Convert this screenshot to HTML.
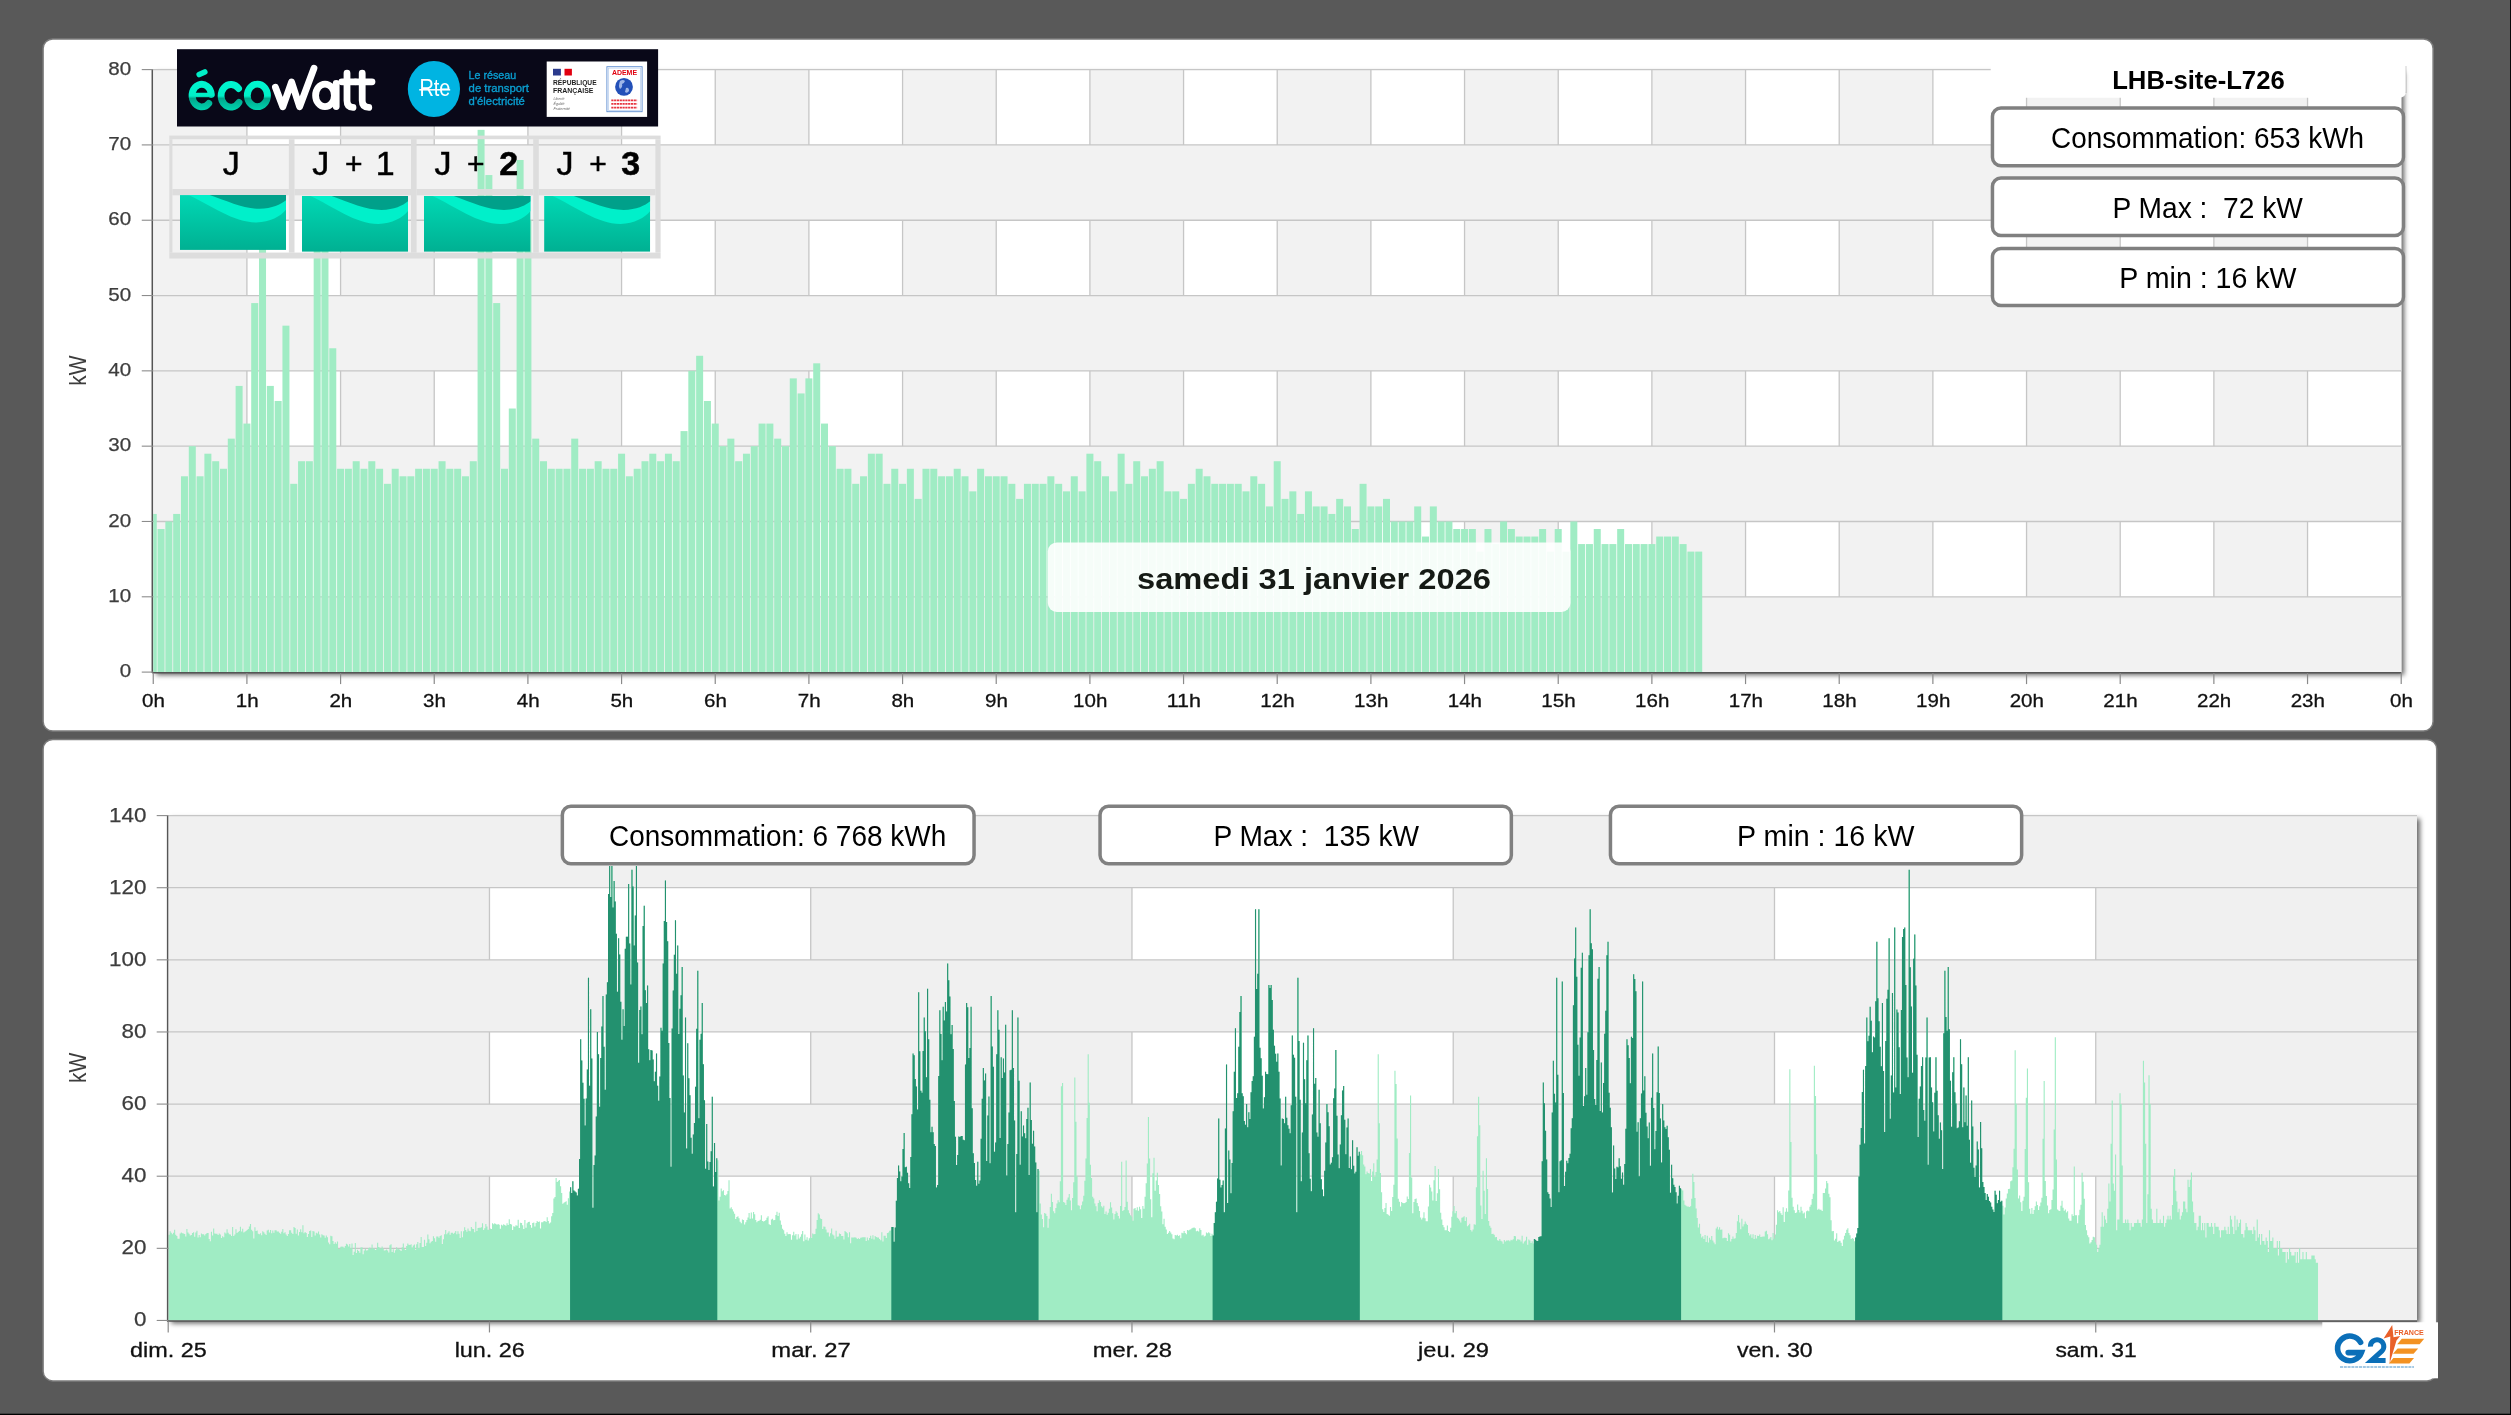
<!DOCTYPE html>
<html><head><meta charset="utf-8"><title>Ecowatt</title>
<style>
html,body{margin:0;padding:0;}
body{width:2511px;height:1415px;overflow:hidden;background:#595959;position:relative;font-family:"Liberation Sans",sans-serif;}
.panel{position:absolute;background:#fff;border-radius:9px;box-shadow:0 0 0 1.2px #7a7a7a, 0 0 2px 1px rgba(125,125,125,.9);}
#p1{left:44.3px;top:39.8px;width:2388px;height:690.4px;}
#p2{left:44.3px;top:740.6px;width:2391.6px;height:639.6px;}
svg#main{position:absolute;left:0;top:0;will-change:transform;}
svg text{font-family:"Liberation Sans",sans-serif;}
</style></head><body>
<svg id="main" width="2511" height="1415" viewBox="0 0 2511 1415">
<rect x="43.1" y="38.9" width="2390" height="692.1" rx="9.6" ry="9.6" fill="#fff" stroke="#7c7c7c" stroke-width="1.5"/>
<rect x="43.1" y="739.5" width="2393.6" height="641.4" rx="9.6" ry="9.6" fill="#fff" stroke="#7c7c7c" stroke-width="1.5"/>
<defs>
<filter id="ps" x="-2%" y="-2%" width="104%" height="106%"><feDropShadow dx="3" dy="3" stdDeviation="2.4" flood-color="#000" flood-opacity="0.6"/></filter>
<clipPath id="tclip"><rect x="153.25" y="64.6" width="2247.95" height="607.5"/></clipPath>
<linearGradient id="eco" gradientUnits="userSpaceOnUse" x1="0" y1="80.5" x2="0" y2="110.3"><stop offset="0" stop-color="#00f6d0"/><stop offset="0.52" stop-color="#00f0c8"/><stop offset="0.6" stop-color="#00a78c"/><stop offset="1" stop-color="#00d4b0"/></linearGradient>
<linearGradient id="sea" x1="0" y1="0" x2="0" y2="1"><stop offset="0" stop-color="#00d8b4"/><stop offset="1" stop-color="#00b092"/></linearGradient>
</defs>
<rect x="153.25" y="69.6" width="2247.95" height="602.5" fill="#fff" filter="url(#ps)"/>
<rect x="153.25" y="69.6" width="93.66" height="602.50" fill="#f2f2f2"/>
<rect x="340.58" y="69.6" width="93.66" height="602.50" fill="#f2f2f2"/>
<rect x="527.91" y="69.6" width="93.66" height="602.50" fill="#f2f2f2"/>
<rect x="715.24" y="69.6" width="93.66" height="602.50" fill="#f2f2f2"/>
<rect x="902.57" y="69.6" width="93.66" height="602.50" fill="#f2f2f2"/>
<rect x="1089.90" y="69.6" width="93.66" height="602.50" fill="#f2f2f2"/>
<rect x="1277.22" y="69.6" width="93.66" height="602.50" fill="#f2f2f2"/>
<rect x="1464.55" y="69.6" width="93.66" height="602.50" fill="#f2f2f2"/>
<rect x="1651.88" y="69.6" width="93.66" height="602.50" fill="#f2f2f2"/>
<rect x="1839.21" y="69.6" width="93.66" height="602.50" fill="#f2f2f2"/>
<rect x="2026.54" y="69.6" width="93.66" height="602.50" fill="#f2f2f2"/>
<rect x="2213.87" y="69.6" width="93.66" height="602.50" fill="#f2f2f2"/>
<line x1="246.91" y1="69.6" x2="246.91" y2="672.1" stroke="#c6c6c6" stroke-width="1.3"/>
<line x1="340.58" y1="69.6" x2="340.58" y2="672.1" stroke="#c6c6c6" stroke-width="1.3"/>
<line x1="434.24" y1="69.6" x2="434.24" y2="672.1" stroke="#c6c6c6" stroke-width="1.3"/>
<line x1="527.91" y1="69.6" x2="527.91" y2="672.1" stroke="#c6c6c6" stroke-width="1.3"/>
<line x1="621.57" y1="69.6" x2="621.57" y2="672.1" stroke="#c6c6c6" stroke-width="1.3"/>
<line x1="715.24" y1="69.6" x2="715.24" y2="672.1" stroke="#c6c6c6" stroke-width="1.3"/>
<line x1="808.90" y1="69.6" x2="808.90" y2="672.1" stroke="#c6c6c6" stroke-width="1.3"/>
<line x1="902.57" y1="69.6" x2="902.57" y2="672.1" stroke="#c6c6c6" stroke-width="1.3"/>
<line x1="996.23" y1="69.6" x2="996.23" y2="672.1" stroke="#c6c6c6" stroke-width="1.3"/>
<line x1="1089.90" y1="69.6" x2="1089.90" y2="672.1" stroke="#c6c6c6" stroke-width="1.3"/>
<line x1="1183.56" y1="69.6" x2="1183.56" y2="672.1" stroke="#c6c6c6" stroke-width="1.3"/>
<line x1="1277.22" y1="69.6" x2="1277.22" y2="672.1" stroke="#c6c6c6" stroke-width="1.3"/>
<line x1="1370.89" y1="69.6" x2="1370.89" y2="672.1" stroke="#c6c6c6" stroke-width="1.3"/>
<line x1="1464.55" y1="69.6" x2="1464.55" y2="672.1" stroke="#c6c6c6" stroke-width="1.3"/>
<line x1="1558.22" y1="69.6" x2="1558.22" y2="672.1" stroke="#c6c6c6" stroke-width="1.3"/>
<line x1="1651.88" y1="69.6" x2="1651.88" y2="672.1" stroke="#c6c6c6" stroke-width="1.3"/>
<line x1="1745.55" y1="69.6" x2="1745.55" y2="672.1" stroke="#c6c6c6" stroke-width="1.3"/>
<line x1="1839.21" y1="69.6" x2="1839.21" y2="672.1" stroke="#c6c6c6" stroke-width="1.3"/>
<line x1="1932.88" y1="69.6" x2="1932.88" y2="672.1" stroke="#c6c6c6" stroke-width="1.3"/>
<line x1="2026.54" y1="69.6" x2="2026.54" y2="672.1" stroke="#c6c6c6" stroke-width="1.3"/>
<line x1="2120.21" y1="69.6" x2="2120.21" y2="672.1" stroke="#c6c6c6" stroke-width="1.3"/>
<line x1="2213.87" y1="69.6" x2="2213.87" y2="672.1" stroke="#c6c6c6" stroke-width="1.3"/>
<line x1="2307.54" y1="69.6" x2="2307.54" y2="672.1" stroke="#c6c6c6" stroke-width="1.3"/>
<rect x="153.25" y="596.79" width="2247.95" height="75.31" fill="#f2f2f2"/>
<rect x="153.25" y="446.16" width="2247.95" height="75.31" fill="#f2f2f2"/>
<rect x="153.25" y="295.54" width="2247.95" height="75.31" fill="#f2f2f2"/>
<rect x="153.25" y="144.91" width="2247.95" height="75.31" fill="#f2f2f2"/>
<line x1="153.25" y1="596.79" x2="2401.2" y2="596.79" stroke="#c6c6c6" stroke-width="1.3"/>
<line x1="153.25" y1="521.48" x2="2401.2" y2="521.48" stroke="#c6c6c6" stroke-width="1.3"/>
<line x1="153.25" y1="446.16" x2="2401.2" y2="446.16" stroke="#c6c6c6" stroke-width="1.3"/>
<line x1="153.25" y1="370.85" x2="2401.2" y2="370.85" stroke="#c6c6c6" stroke-width="1.3"/>
<line x1="153.25" y1="295.54" x2="2401.2" y2="295.54" stroke="#c6c6c6" stroke-width="1.3"/>
<line x1="153.25" y1="220.23" x2="2401.2" y2="220.23" stroke="#c6c6c6" stroke-width="1.3"/>
<line x1="153.25" y1="144.91" x2="2401.2" y2="144.91" stroke="#c6c6c6" stroke-width="1.3"/>
<line x1="153.25" y1="69.60" x2="2401.2" y2="69.60" stroke="#c6c6c6" stroke-width="1.3"/>
<g clip-path="url(#tclip)" fill="#a0ecc4">
<rect x="149.75" y="513.94" width="7.0" height="158.16"/>
<rect x="157.56" y="529.01" width="7.0" height="143.09"/>
<rect x="165.36" y="521.48" width="7.0" height="150.62"/>
<rect x="173.17" y="513.94" width="7.0" height="158.16"/>
<rect x="180.97" y="476.29" width="7.0" height="195.81"/>
<rect x="188.78" y="446.16" width="7.0" height="225.94"/>
<rect x="196.58" y="476.29" width="7.0" height="195.81"/>
<rect x="204.39" y="453.69" width="7.0" height="218.41"/>
<rect x="212.19" y="461.23" width="7.0" height="210.88"/>
<rect x="220.00" y="468.76" width="7.0" height="203.34"/>
<rect x="227.80" y="438.63" width="7.0" height="233.47"/>
<rect x="235.61" y="385.91" width="7.0" height="286.19"/>
<rect x="243.41" y="423.57" width="7.0" height="248.53"/>
<rect x="251.22" y="303.07" width="7.0" height="369.03"/>
<rect x="259.03" y="212.69" width="7.0" height="459.41"/>
<rect x="266.83" y="385.91" width="7.0" height="286.19"/>
<rect x="274.64" y="400.98" width="7.0" height="271.12"/>
<rect x="282.44" y="325.66" width="7.0" height="346.44"/>
<rect x="290.25" y="483.82" width="7.0" height="188.28"/>
<rect x="298.05" y="461.23" width="7.0" height="210.88"/>
<rect x="305.86" y="461.23" width="7.0" height="210.88"/>
<rect x="313.66" y="197.63" width="7.0" height="474.47"/>
<rect x="321.47" y="220.23" width="7.0" height="451.88"/>
<rect x="329.27" y="348.26" width="7.0" height="323.84"/>
<rect x="337.08" y="468.76" width="7.0" height="203.34"/>
<rect x="344.88" y="468.76" width="7.0" height="203.34"/>
<rect x="352.69" y="461.23" width="7.0" height="210.88"/>
<rect x="360.50" y="468.76" width="7.0" height="203.34"/>
<rect x="368.30" y="461.23" width="7.0" height="210.88"/>
<rect x="376.11" y="468.76" width="7.0" height="203.34"/>
<rect x="383.91" y="483.82" width="7.0" height="188.28"/>
<rect x="391.72" y="468.76" width="7.0" height="203.34"/>
<rect x="399.52" y="476.29" width="7.0" height="195.81"/>
<rect x="407.33" y="476.29" width="7.0" height="195.81"/>
<rect x="415.13" y="468.76" width="7.0" height="203.34"/>
<rect x="422.94" y="468.76" width="7.0" height="203.34"/>
<rect x="430.74" y="468.76" width="7.0" height="203.34"/>
<rect x="438.55" y="461.23" width="7.0" height="210.88"/>
<rect x="446.35" y="468.76" width="7.0" height="203.34"/>
<rect x="454.16" y="468.76" width="7.0" height="203.34"/>
<rect x="461.97" y="476.29" width="7.0" height="195.81"/>
<rect x="469.77" y="461.23" width="7.0" height="210.88"/>
<rect x="477.58" y="129.85" width="7.0" height="542.25"/>
<rect x="485.38" y="175.04" width="7.0" height="497.06"/>
<rect x="493.19" y="303.07" width="7.0" height="369.03"/>
<rect x="500.99" y="468.76" width="7.0" height="203.34"/>
<rect x="508.80" y="408.51" width="7.0" height="263.59"/>
<rect x="516.60" y="159.98" width="7.0" height="512.12"/>
<rect x="524.41" y="220.23" width="7.0" height="451.88"/>
<rect x="532.21" y="438.63" width="7.0" height="233.47"/>
<rect x="540.02" y="461.23" width="7.0" height="210.88"/>
<rect x="547.82" y="468.76" width="7.0" height="203.34"/>
<rect x="555.63" y="468.76" width="7.0" height="203.34"/>
<rect x="563.44" y="468.76" width="7.0" height="203.34"/>
<rect x="571.24" y="438.63" width="7.0" height="233.47"/>
<rect x="579.05" y="468.76" width="7.0" height="203.34"/>
<rect x="586.85" y="468.76" width="7.0" height="203.34"/>
<rect x="594.66" y="461.23" width="7.0" height="210.88"/>
<rect x="602.46" y="468.76" width="7.0" height="203.34"/>
<rect x="610.27" y="468.76" width="7.0" height="203.34"/>
<rect x="618.07" y="453.69" width="7.0" height="218.41"/>
<rect x="625.88" y="476.29" width="7.0" height="195.81"/>
<rect x="633.68" y="468.76" width="7.0" height="203.34"/>
<rect x="641.49" y="461.23" width="7.0" height="210.88"/>
<rect x="649.29" y="453.69" width="7.0" height="218.41"/>
<rect x="657.10" y="461.23" width="7.0" height="210.88"/>
<rect x="664.91" y="453.69" width="7.0" height="218.41"/>
<rect x="672.71" y="461.23" width="7.0" height="210.88"/>
<rect x="680.52" y="431.10" width="7.0" height="241.00"/>
<rect x="688.32" y="370.85" width="7.0" height="301.25"/>
<rect x="696.13" y="355.79" width="7.0" height="316.31"/>
<rect x="703.93" y="400.98" width="7.0" height="271.12"/>
<rect x="711.74" y="423.57" width="7.0" height="248.53"/>
<rect x="719.54" y="446.16" width="7.0" height="225.94"/>
<rect x="727.35" y="438.63" width="7.0" height="233.47"/>
<rect x="735.15" y="461.23" width="7.0" height="210.88"/>
<rect x="742.96" y="453.69" width="7.0" height="218.41"/>
<rect x="750.76" y="446.16" width="7.0" height="225.94"/>
<rect x="758.57" y="423.57" width="7.0" height="248.53"/>
<rect x="766.38" y="423.57" width="7.0" height="248.53"/>
<rect x="774.18" y="438.63" width="7.0" height="233.47"/>
<rect x="781.99" y="446.16" width="7.0" height="225.94"/>
<rect x="789.79" y="378.38" width="7.0" height="293.72"/>
<rect x="797.60" y="393.44" width="7.0" height="278.66"/>
<rect x="805.40" y="378.38" width="7.0" height="293.72"/>
<rect x="813.21" y="363.32" width="7.0" height="308.78"/>
<rect x="821.01" y="423.57" width="7.0" height="248.53"/>
<rect x="828.82" y="446.16" width="7.0" height="225.94"/>
<rect x="836.62" y="468.76" width="7.0" height="203.34"/>
<rect x="844.43" y="468.76" width="7.0" height="203.34"/>
<rect x="852.23" y="483.82" width="7.0" height="188.28"/>
<rect x="860.04" y="476.29" width="7.0" height="195.81"/>
<rect x="867.85" y="453.69" width="7.0" height="218.41"/>
<rect x="875.65" y="453.69" width="7.0" height="218.41"/>
<rect x="883.46" y="483.82" width="7.0" height="188.28"/>
<rect x="891.26" y="468.76" width="7.0" height="203.34"/>
<rect x="899.07" y="483.82" width="7.0" height="188.28"/>
<rect x="906.87" y="468.76" width="7.0" height="203.34"/>
<rect x="914.68" y="498.88" width="7.0" height="173.22"/>
<rect x="922.48" y="468.76" width="7.0" height="203.34"/>
<rect x="930.29" y="468.76" width="7.0" height="203.34"/>
<rect x="938.09" y="476.29" width="7.0" height="195.81"/>
<rect x="945.90" y="476.29" width="7.0" height="195.81"/>
<rect x="953.70" y="468.76" width="7.0" height="203.34"/>
<rect x="961.51" y="476.29" width="7.0" height="195.81"/>
<rect x="969.32" y="491.35" width="7.0" height="180.75"/>
<rect x="977.12" y="468.76" width="7.0" height="203.34"/>
<rect x="984.93" y="476.29" width="7.0" height="195.81"/>
<rect x="992.73" y="476.29" width="7.0" height="195.81"/>
<rect x="1000.54" y="476.29" width="7.0" height="195.81"/>
<rect x="1008.34" y="483.82" width="7.0" height="188.28"/>
<rect x="1016.15" y="498.88" width="7.0" height="173.22"/>
<rect x="1023.95" y="483.82" width="7.0" height="188.28"/>
<rect x="1031.76" y="483.82" width="7.0" height="188.28"/>
<rect x="1039.56" y="483.82" width="7.0" height="188.28"/>
<rect x="1047.37" y="476.29" width="7.0" height="195.81"/>
<rect x="1055.17" y="483.82" width="7.0" height="188.28"/>
<rect x="1062.98" y="491.35" width="7.0" height="180.75"/>
<rect x="1070.79" y="476.29" width="7.0" height="195.81"/>
<rect x="1078.59" y="491.35" width="7.0" height="180.75"/>
<rect x="1086.40" y="453.69" width="7.0" height="218.41"/>
<rect x="1094.20" y="461.23" width="7.0" height="210.88"/>
<rect x="1102.01" y="476.29" width="7.0" height="195.81"/>
<rect x="1109.81" y="491.35" width="7.0" height="180.75"/>
<rect x="1117.62" y="453.69" width="7.0" height="218.41"/>
<rect x="1125.42" y="483.82" width="7.0" height="188.28"/>
<rect x="1133.23" y="461.23" width="7.0" height="210.88"/>
<rect x="1141.03" y="476.29" width="7.0" height="195.81"/>
<rect x="1148.84" y="468.76" width="7.0" height="203.34"/>
<rect x="1156.64" y="461.23" width="7.0" height="210.88"/>
<rect x="1164.45" y="491.35" width="7.0" height="180.75"/>
<rect x="1172.26" y="491.35" width="7.0" height="180.75"/>
<rect x="1180.06" y="498.88" width="7.0" height="173.22"/>
<rect x="1187.87" y="483.82" width="7.0" height="188.28"/>
<rect x="1195.67" y="468.76" width="7.0" height="203.34"/>
<rect x="1203.48" y="476.29" width="7.0" height="195.81"/>
<rect x="1211.28" y="483.82" width="7.0" height="188.28"/>
<rect x="1219.09" y="483.82" width="7.0" height="188.28"/>
<rect x="1226.89" y="483.82" width="7.0" height="188.28"/>
<rect x="1234.70" y="483.82" width="7.0" height="188.28"/>
<rect x="1242.50" y="491.35" width="7.0" height="180.75"/>
<rect x="1250.31" y="476.29" width="7.0" height="195.81"/>
<rect x="1258.11" y="483.82" width="7.0" height="188.28"/>
<rect x="1265.92" y="506.41" width="7.0" height="165.69"/>
<rect x="1273.72" y="461.23" width="7.0" height="210.88"/>
<rect x="1281.53" y="498.88" width="7.0" height="173.22"/>
<rect x="1289.34" y="491.35" width="7.0" height="180.75"/>
<rect x="1297.14" y="513.94" width="7.0" height="158.16"/>
<rect x="1304.95" y="491.35" width="7.0" height="180.75"/>
<rect x="1312.75" y="506.41" width="7.0" height="165.69"/>
<rect x="1320.56" y="506.41" width="7.0" height="165.69"/>
<rect x="1328.36" y="513.94" width="7.0" height="158.16"/>
<rect x="1336.17" y="498.88" width="7.0" height="173.22"/>
<rect x="1343.97" y="506.41" width="7.0" height="165.69"/>
<rect x="1351.78" y="529.01" width="7.0" height="143.09"/>
<rect x="1359.58" y="483.82" width="7.0" height="188.28"/>
<rect x="1367.39" y="506.41" width="7.0" height="165.69"/>
<rect x="1375.19" y="506.41" width="7.0" height="165.69"/>
<rect x="1383.00" y="498.88" width="7.0" height="173.22"/>
<rect x="1390.81" y="521.48" width="7.0" height="150.62"/>
<rect x="1398.61" y="521.48" width="7.0" height="150.62"/>
<rect x="1406.42" y="521.48" width="7.0" height="150.62"/>
<rect x="1414.22" y="506.41" width="7.0" height="165.69"/>
<rect x="1422.03" y="536.54" width="7.0" height="135.56"/>
<rect x="1429.83" y="506.41" width="7.0" height="165.69"/>
<rect x="1437.64" y="521.48" width="7.0" height="150.62"/>
<rect x="1445.44" y="521.48" width="7.0" height="150.62"/>
<rect x="1453.25" y="529.01" width="7.0" height="143.09"/>
<rect x="1461.05" y="529.01" width="7.0" height="143.09"/>
<rect x="1468.86" y="529.01" width="7.0" height="143.09"/>
<rect x="1476.66" y="551.60" width="7.0" height="120.50"/>
<rect x="1484.47" y="529.01" width="7.0" height="143.09"/>
<rect x="1492.28" y="544.07" width="7.0" height="128.03"/>
<rect x="1500.08" y="521.48" width="7.0" height="150.62"/>
<rect x="1507.89" y="529.01" width="7.0" height="143.09"/>
<rect x="1515.69" y="536.54" width="7.0" height="135.56"/>
<rect x="1523.50" y="536.54" width="7.0" height="135.56"/>
<rect x="1531.30" y="536.54" width="7.0" height="135.56"/>
<rect x="1539.11" y="529.01" width="7.0" height="143.09"/>
<rect x="1546.91" y="551.60" width="7.0" height="120.50"/>
<rect x="1554.72" y="529.01" width="7.0" height="143.09"/>
<rect x="1562.52" y="551.60" width="7.0" height="120.50"/>
<rect x="1570.33" y="521.48" width="7.0" height="150.62"/>
<rect x="1578.13" y="544.07" width="7.0" height="128.03"/>
<rect x="1585.94" y="544.07" width="7.0" height="128.03"/>
<rect x="1593.75" y="529.01" width="7.0" height="143.09"/>
<rect x="1601.55" y="544.07" width="7.0" height="128.03"/>
<rect x="1609.36" y="544.07" width="7.0" height="128.03"/>
<rect x="1617.16" y="529.01" width="7.0" height="143.09"/>
<rect x="1624.97" y="544.07" width="7.0" height="128.03"/>
<rect x="1632.77" y="544.07" width="7.0" height="128.03"/>
<rect x="1640.58" y="544.07" width="7.0" height="128.03"/>
<rect x="1648.38" y="544.07" width="7.0" height="128.03"/>
<rect x="1656.19" y="536.54" width="7.0" height="135.56"/>
<rect x="1663.99" y="536.54" width="7.0" height="135.56"/>
<rect x="1671.80" y="536.54" width="7.0" height="135.56"/>
<rect x="1679.60" y="544.07" width="7.0" height="128.03"/>
<rect x="1687.41" y="551.60" width="7.0" height="120.50"/>
<rect x="1695.22" y="551.60" width="7.0" height="120.50"/>
</g>
<line x1="152.3" y1="69.6" x2="152.3" y2="673.1" stroke="#555" stroke-width="1.5"/>
<line x1="152.25" y1="672.7" x2="2401.2" y2="672.7" stroke="#555" stroke-width="1.6"/>
<line x1="141.75" y1="672.10" x2="153.25" y2="672.10" stroke="#8c8c8c" stroke-width="1.1"/>
<text x="119.76" y="677.20" font-size="18.5" font-weight="normal" fill="#3d3d3d" text-anchor="start" textLength="11.44" lengthAdjust="spacingAndGlyphs" stroke="#3d3d3d" stroke-width="0.25" xml:space="preserve">0</text>
<line x1="141.75" y1="596.79" x2="153.25" y2="596.79" stroke="#8c8c8c" stroke-width="1.1"/>
<text x="108.31" y="601.89" font-size="18.5" font-weight="normal" fill="#3d3d3d" text-anchor="start" textLength="22.89" lengthAdjust="spacingAndGlyphs" stroke="#3d3d3d" stroke-width="0.25" xml:space="preserve">10</text>
<line x1="141.75" y1="521.48" x2="153.25" y2="521.48" stroke="#8c8c8c" stroke-width="1.1"/>
<text x="108.31" y="526.58" font-size="18.5" font-weight="normal" fill="#3d3d3d" text-anchor="start" textLength="22.89" lengthAdjust="spacingAndGlyphs" stroke="#3d3d3d" stroke-width="0.25" xml:space="preserve">20</text>
<line x1="141.75" y1="446.16" x2="153.25" y2="446.16" stroke="#8c8c8c" stroke-width="1.1"/>
<text x="108.31" y="451.26" font-size="18.5" font-weight="normal" fill="#3d3d3d" text-anchor="start" textLength="22.89" lengthAdjust="spacingAndGlyphs" stroke="#3d3d3d" stroke-width="0.25" xml:space="preserve">30</text>
<line x1="141.75" y1="370.85" x2="153.25" y2="370.85" stroke="#8c8c8c" stroke-width="1.1"/>
<text x="108.31" y="375.95" font-size="18.5" font-weight="normal" fill="#3d3d3d" text-anchor="start" textLength="22.89" lengthAdjust="spacingAndGlyphs" stroke="#3d3d3d" stroke-width="0.25" xml:space="preserve">40</text>
<line x1="141.75" y1="295.54" x2="153.25" y2="295.54" stroke="#8c8c8c" stroke-width="1.1"/>
<text x="108.31" y="300.64" font-size="18.5" font-weight="normal" fill="#3d3d3d" text-anchor="start" textLength="22.89" lengthAdjust="spacingAndGlyphs" stroke="#3d3d3d" stroke-width="0.25" xml:space="preserve">50</text>
<line x1="141.75" y1="220.23" x2="153.25" y2="220.23" stroke="#8c8c8c" stroke-width="1.1"/>
<text x="108.31" y="225.33" font-size="18.5" font-weight="normal" fill="#3d3d3d" text-anchor="start" textLength="22.89" lengthAdjust="spacingAndGlyphs" stroke="#3d3d3d" stroke-width="0.25" xml:space="preserve">60</text>
<line x1="141.75" y1="144.91" x2="153.25" y2="144.91" stroke="#8c8c8c" stroke-width="1.1"/>
<text x="108.31" y="150.01" font-size="18.5" font-weight="normal" fill="#3d3d3d" text-anchor="start" textLength="22.89" lengthAdjust="spacingAndGlyphs" stroke="#3d3d3d" stroke-width="0.25" xml:space="preserve">70</text>
<line x1="141.75" y1="69.60" x2="153.25" y2="69.60" stroke="#8c8c8c" stroke-width="1.1"/>
<text x="108.31" y="74.70" font-size="18.5" font-weight="normal" fill="#3d3d3d" text-anchor="start" textLength="22.89" lengthAdjust="spacingAndGlyphs" stroke="#3d3d3d" stroke-width="0.25" xml:space="preserve">80</text>
<line x1="153.25" y1="673.1" x2="153.25" y2="684.1" stroke="#8a8a8a" stroke-width="1.2"/>
<text x="142.13" y="707.00" font-size="18.5" font-weight="normal" fill="#111" text-anchor="start" textLength="22.83" lengthAdjust="spacingAndGlyphs" stroke="#111" stroke-width="0.3" xml:space="preserve">0h</text>
<line x1="246.91" y1="673.1" x2="246.91" y2="684.1" stroke="#8a8a8a" stroke-width="1.2"/>
<text x="235.80" y="707.00" font-size="18.5" font-weight="normal" fill="#111" text-anchor="start" textLength="22.83" lengthAdjust="spacingAndGlyphs" stroke="#111" stroke-width="0.3" xml:space="preserve">1h</text>
<line x1="340.58" y1="673.1" x2="340.58" y2="684.1" stroke="#8a8a8a" stroke-width="1.2"/>
<text x="329.46" y="707.00" font-size="18.5" font-weight="normal" fill="#111" text-anchor="start" textLength="22.83" lengthAdjust="spacingAndGlyphs" stroke="#111" stroke-width="0.3" xml:space="preserve">2h</text>
<line x1="434.24" y1="673.1" x2="434.24" y2="684.1" stroke="#8a8a8a" stroke-width="1.2"/>
<text x="423.13" y="707.00" font-size="18.5" font-weight="normal" fill="#111" text-anchor="start" textLength="22.83" lengthAdjust="spacingAndGlyphs" stroke="#111" stroke-width="0.3" xml:space="preserve">3h</text>
<line x1="527.91" y1="673.1" x2="527.91" y2="684.1" stroke="#8a8a8a" stroke-width="1.2"/>
<text x="516.79" y="707.00" font-size="18.5" font-weight="normal" fill="#111" text-anchor="start" textLength="22.83" lengthAdjust="spacingAndGlyphs" stroke="#111" stroke-width="0.3" xml:space="preserve">4h</text>
<line x1="621.57" y1="673.1" x2="621.57" y2="684.1" stroke="#8a8a8a" stroke-width="1.2"/>
<text x="610.46" y="707.00" font-size="18.5" font-weight="normal" fill="#111" text-anchor="start" textLength="22.83" lengthAdjust="spacingAndGlyphs" stroke="#111" stroke-width="0.3" xml:space="preserve">5h</text>
<line x1="715.24" y1="673.1" x2="715.24" y2="684.1" stroke="#8a8a8a" stroke-width="1.2"/>
<text x="704.12" y="707.00" font-size="18.5" font-weight="normal" fill="#111" text-anchor="start" textLength="22.83" lengthAdjust="spacingAndGlyphs" stroke="#111" stroke-width="0.3" xml:space="preserve">6h</text>
<line x1="808.90" y1="673.1" x2="808.90" y2="684.1" stroke="#8a8a8a" stroke-width="1.2"/>
<text x="797.79" y="707.00" font-size="18.5" font-weight="normal" fill="#111" text-anchor="start" textLength="22.83" lengthAdjust="spacingAndGlyphs" stroke="#111" stroke-width="0.3" xml:space="preserve">7h</text>
<line x1="902.57" y1="673.1" x2="902.57" y2="684.1" stroke="#8a8a8a" stroke-width="1.2"/>
<text x="891.45" y="707.00" font-size="18.5" font-weight="normal" fill="#111" text-anchor="start" textLength="22.83" lengthAdjust="spacingAndGlyphs" stroke="#111" stroke-width="0.3" xml:space="preserve">8h</text>
<line x1="996.23" y1="673.1" x2="996.23" y2="684.1" stroke="#8a8a8a" stroke-width="1.2"/>
<text x="985.11" y="707.00" font-size="18.5" font-weight="normal" fill="#111" text-anchor="start" textLength="22.83" lengthAdjust="spacingAndGlyphs" stroke="#111" stroke-width="0.3" xml:space="preserve">9h</text>
<line x1="1089.90" y1="673.1" x2="1089.90" y2="684.1" stroke="#8a8a8a" stroke-width="1.2"/>
<text x="1073.06" y="707.00" font-size="18.5" font-weight="normal" fill="#111" text-anchor="start" textLength="34.28" lengthAdjust="spacingAndGlyphs" stroke="#111" stroke-width="0.3" xml:space="preserve">10h</text>
<line x1="1183.56" y1="673.1" x2="1183.56" y2="684.1" stroke="#8a8a8a" stroke-width="1.2"/>
<text x="1166.72" y="707.00" font-size="18.5" font-weight="normal" fill="#111" text-anchor="start" textLength="34.28" lengthAdjust="spacingAndGlyphs" stroke="#111" stroke-width="0.3" xml:space="preserve">11h</text>
<line x1="1277.22" y1="673.1" x2="1277.22" y2="684.1" stroke="#8a8a8a" stroke-width="1.2"/>
<text x="1260.39" y="707.00" font-size="18.5" font-weight="normal" fill="#111" text-anchor="start" textLength="34.28" lengthAdjust="spacingAndGlyphs" stroke="#111" stroke-width="0.3" xml:space="preserve">12h</text>
<line x1="1370.89" y1="673.1" x2="1370.89" y2="684.1" stroke="#8a8a8a" stroke-width="1.2"/>
<text x="1354.05" y="707.00" font-size="18.5" font-weight="normal" fill="#111" text-anchor="start" textLength="34.28" lengthAdjust="spacingAndGlyphs" stroke="#111" stroke-width="0.3" xml:space="preserve">13h</text>
<line x1="1464.55" y1="673.1" x2="1464.55" y2="684.1" stroke="#8a8a8a" stroke-width="1.2"/>
<text x="1447.72" y="707.00" font-size="18.5" font-weight="normal" fill="#111" text-anchor="start" textLength="34.28" lengthAdjust="spacingAndGlyphs" stroke="#111" stroke-width="0.3" xml:space="preserve">14h</text>
<line x1="1558.22" y1="673.1" x2="1558.22" y2="684.1" stroke="#8a8a8a" stroke-width="1.2"/>
<text x="1541.38" y="707.00" font-size="18.5" font-weight="normal" fill="#111" text-anchor="start" textLength="34.28" lengthAdjust="spacingAndGlyphs" stroke="#111" stroke-width="0.3" xml:space="preserve">15h</text>
<line x1="1651.88" y1="673.1" x2="1651.88" y2="684.1" stroke="#8a8a8a" stroke-width="1.2"/>
<text x="1635.05" y="707.00" font-size="18.5" font-weight="normal" fill="#111" text-anchor="start" textLength="34.28" lengthAdjust="spacingAndGlyphs" stroke="#111" stroke-width="0.3" xml:space="preserve">16h</text>
<line x1="1745.55" y1="673.1" x2="1745.55" y2="684.1" stroke="#8a8a8a" stroke-width="1.2"/>
<text x="1728.71" y="707.00" font-size="18.5" font-weight="normal" fill="#111" text-anchor="start" textLength="34.28" lengthAdjust="spacingAndGlyphs" stroke="#111" stroke-width="0.3" xml:space="preserve">17h</text>
<line x1="1839.21" y1="673.1" x2="1839.21" y2="684.1" stroke="#8a8a8a" stroke-width="1.2"/>
<text x="1822.37" y="707.00" font-size="18.5" font-weight="normal" fill="#111" text-anchor="start" textLength="34.28" lengthAdjust="spacingAndGlyphs" stroke="#111" stroke-width="0.3" xml:space="preserve">18h</text>
<line x1="1932.88" y1="673.1" x2="1932.88" y2="684.1" stroke="#8a8a8a" stroke-width="1.2"/>
<text x="1916.04" y="707.00" font-size="18.5" font-weight="normal" fill="#111" text-anchor="start" textLength="34.28" lengthAdjust="spacingAndGlyphs" stroke="#111" stroke-width="0.3" xml:space="preserve">19h</text>
<line x1="2026.54" y1="673.1" x2="2026.54" y2="684.1" stroke="#8a8a8a" stroke-width="1.2"/>
<text x="2009.70" y="707.00" font-size="18.5" font-weight="normal" fill="#111" text-anchor="start" textLength="34.28" lengthAdjust="spacingAndGlyphs" stroke="#111" stroke-width="0.3" xml:space="preserve">20h</text>
<line x1="2120.21" y1="673.1" x2="2120.21" y2="684.1" stroke="#8a8a8a" stroke-width="1.2"/>
<text x="2103.37" y="707.00" font-size="18.5" font-weight="normal" fill="#111" text-anchor="start" textLength="34.28" lengthAdjust="spacingAndGlyphs" stroke="#111" stroke-width="0.3" xml:space="preserve">21h</text>
<line x1="2213.87" y1="673.1" x2="2213.87" y2="684.1" stroke="#8a8a8a" stroke-width="1.2"/>
<text x="2197.03" y="707.00" font-size="18.5" font-weight="normal" fill="#111" text-anchor="start" textLength="34.28" lengthAdjust="spacingAndGlyphs" stroke="#111" stroke-width="0.3" xml:space="preserve">22h</text>
<line x1="2307.54" y1="673.1" x2="2307.54" y2="684.1" stroke="#8a8a8a" stroke-width="1.2"/>
<text x="2290.70" y="707.00" font-size="18.5" font-weight="normal" fill="#111" text-anchor="start" textLength="34.28" lengthAdjust="spacingAndGlyphs" stroke="#111" stroke-width="0.3" xml:space="preserve">23h</text>
<line x1="2401.20" y1="673.1" x2="2401.20" y2="684.1" stroke="#8a8a8a" stroke-width="1.2"/>
<text x="2390.08" y="707.00" font-size="18.5" font-weight="normal" fill="#111" text-anchor="start" textLength="22.83" lengthAdjust="spacingAndGlyphs" stroke="#111" stroke-width="0.3" xml:space="preserve">0h</text>
<g transform="translate(86.1,370.6) rotate(-90)"><text x="-15.10" y="0.00" font-size="24" font-weight="normal" fill="#3d3d3d" text-anchor="start" textLength="30.20" lengthAdjust="spacingAndGlyphs"  xml:space="preserve">kW</text></g>
<rect x="168.2" y="815.6" width="2248.8" height="504.85" fill="#fff" filter="url(#ps)"/>
<rect x="168.20" y="815.6" width="321.26" height="504.85" fill="#f0f0f0"/>
<rect x="810.71" y="815.6" width="321.26" height="504.85" fill="#f0f0f0"/>
<rect x="1453.23" y="815.6" width="321.26" height="504.85" fill="#f0f0f0"/>
<rect x="2095.74" y="815.6" width="321.26" height="504.85" fill="#f0f0f0"/>
<line x1="489.46" y1="815.6" x2="489.46" y2="1320.45" stroke="#c6c6c6" stroke-width="1.3"/>
<line x1="810.71" y1="815.6" x2="810.71" y2="1320.45" stroke="#c6c6c6" stroke-width="1.3"/>
<line x1="1131.97" y1="815.6" x2="1131.97" y2="1320.45" stroke="#c6c6c6" stroke-width="1.3"/>
<line x1="1453.23" y1="815.6" x2="1453.23" y2="1320.45" stroke="#c6c6c6" stroke-width="1.3"/>
<line x1="1774.49" y1="815.6" x2="1774.49" y2="1320.45" stroke="#c6c6c6" stroke-width="1.3"/>
<line x1="2095.74" y1="815.6" x2="2095.74" y2="1320.45" stroke="#c6c6c6" stroke-width="1.3"/>
<rect x="168.2" y="1248.33" width="2248.8" height="72.12" fill="#f0f0f0"/>
<rect x="168.2" y="1104.09" width="2248.8" height="72.12" fill="#f0f0f0"/>
<rect x="168.2" y="959.84" width="2248.8" height="72.12" fill="#f0f0f0"/>
<rect x="168.2" y="815.60" width="2248.8" height="72.12" fill="#f0f0f0"/>
<line x1="168.2" y1="1248.33" x2="2417.0" y2="1248.33" stroke="#c6c6c6" stroke-width="1.3"/>
<line x1="168.2" y1="1176.21" x2="2417.0" y2="1176.21" stroke="#c6c6c6" stroke-width="1.3"/>
<line x1="168.2" y1="1104.09" x2="2417.0" y2="1104.09" stroke="#c6c6c6" stroke-width="1.3"/>
<line x1="168.2" y1="1031.96" x2="2417.0" y2="1031.96" stroke="#c6c6c6" stroke-width="1.3"/>
<line x1="168.2" y1="959.84" x2="2417.0" y2="959.84" stroke="#c6c6c6" stroke-width="1.3"/>
<line x1="168.2" y1="887.72" x2="2417.0" y2="887.72" stroke="#c6c6c6" stroke-width="1.3"/>
<line x1="168.2" y1="815.60" x2="2417.0" y2="815.60" stroke="#c6c6c6" stroke-width="1.3"/>
<path d="M168.50,1320.45L168.50,1234.83L169.62,1234.83L169.62,1231.27L170.73,1231.27L170.73,1232.63L171.85,1232.63L171.85,1234.22L172.96,1234.22L172.96,1232.72L174.08,1232.72L174.08,1229.72L175.19,1229.72L175.19,1234.68L176.31,1234.68L176.31,1235.94L177.42,1235.94L177.42,1238.80L178.54,1238.80L178.54,1238.84L179.65,1238.84L179.65,1233.50L180.77,1233.50L180.77,1232.42L181.89,1232.42L181.89,1233.21L183.00,1233.21L183.00,1233.52L184.12,1233.52L184.12,1234.11L185.23,1234.11L185.23,1236.42L186.35,1236.42L186.35,1229.01L187.46,1229.01L187.46,1232.49L188.58,1232.49L188.58,1233.71L189.69,1233.71L189.69,1235.55L190.81,1235.55L190.81,1235.01L191.92,1235.01L191.93,1232.98L193.04,1232.98L193.04,1232.28L194.16,1232.28L194.16,1236.81L195.27,1236.81L195.27,1232.48L196.39,1232.48L196.39,1230.72L197.50,1230.72L197.50,1237.38L198.62,1237.38L198.62,1235.09L199.73,1235.09L199.73,1237.30L200.85,1237.30L200.85,1233.41L201.96,1233.41L201.96,1234.32L203.08,1234.32L203.08,1234.31L204.20,1234.31L204.20,1235.59L205.31,1235.59L205.31,1234.02L206.43,1234.02L206.43,1233.03L207.54,1233.03L207.54,1232.96L208.66,1232.96L208.66,1238.95L209.77,1238.95L209.77,1241.13L210.89,1241.13L210.89,1231.70L212.00,1231.70L212.00,1235.46L213.12,1235.46L213.12,1228.44L214.23,1228.44L214.23,1233.39L215.35,1233.39L215.35,1233.64L216.47,1233.64L216.47,1233.69L217.58,1233.69L217.58,1235.10L218.70,1235.10L218.70,1233.51L219.81,1233.51L219.81,1234.58L220.93,1234.58L220.93,1238.02L222.04,1238.02L222.04,1236.16L223.16,1236.16L223.16,1237.18L224.27,1237.18L224.27,1232.49L225.39,1232.49L225.39,1233.61L226.50,1233.61L226.50,1229.27L227.62,1229.27L227.62,1232.65L228.74,1232.65L228.74,1234.27L229.85,1234.27L229.85,1234.46L230.97,1234.46L230.97,1235.96L232.08,1235.96L232.08,1227.09L233.20,1227.09L233.20,1235.94L234.31,1235.94L234.31,1234.52L235.43,1234.52L235.43,1229.28L236.54,1229.28L236.54,1232.99L237.66,1232.99L237.66,1231.90L238.78,1231.90L238.78,1231.11L239.89,1231.11L239.89,1226.85L241.01,1226.85L241.01,1231.49L242.12,1231.49L242.12,1228.86L243.24,1228.86L243.24,1232.42L244.35,1232.42L244.35,1231.86L245.47,1231.86L245.47,1231.04L246.58,1231.04L246.58,1229.91L247.70,1229.91L247.70,1229.09L248.81,1229.09L248.81,1226.42L249.93,1226.42L249.93,1224.00L251.05,1224.00L251.05,1229.75L252.16,1229.75L252.16,1231.31L253.28,1231.31L253.28,1238.46L254.39,1238.46L254.39,1227.25L255.51,1227.25L255.51,1231.05L256.62,1231.05L256.62,1230.42L257.74,1230.42L257.74,1233.78L258.85,1233.78L258.85,1234.31L259.97,1234.31L259.97,1233.13L261.08,1233.13L261.08,1235.37L262.20,1235.37L262.20,1231.18L263.32,1231.18L263.32,1232.15L264.43,1232.15L264.43,1233.78L265.55,1233.78L265.55,1235.02L266.66,1235.02L266.66,1230.39L267.78,1230.39L267.78,1229.69L268.89,1229.69L268.89,1232.53L270.01,1232.53L270.01,1230.12L271.12,1230.12L271.12,1233.34L272.24,1233.34L272.24,1230.57L273.35,1230.57L273.35,1232.76L274.47,1232.76L274.47,1230.37L275.59,1230.37L275.59,1230.17L276.70,1230.17L276.70,1231.62L277.82,1231.62L277.82,1231.49L278.93,1231.49L278.93,1232.70L280.05,1232.70L280.05,1233.74L281.16,1233.74L281.16,1231.82L282.28,1231.82L282.28,1229.08L283.39,1229.08L283.39,1233.14L284.51,1233.14L284.51,1232.19L285.63,1232.19L285.62,1234.56L286.74,1234.56L286.74,1235.99L287.86,1235.99L287.86,1233.91L288.97,1233.91L288.97,1230.23L290.09,1230.23L290.09,1230.22L291.20,1230.22L291.20,1232.79L292.32,1232.79L292.32,1234.00L293.43,1234.00L293.43,1226.95L294.55,1226.95L294.55,1227.89L295.66,1227.89L295.66,1233.63L296.78,1233.63L296.78,1229.60L297.90,1229.60L297.90,1235.48L299.01,1235.48L299.01,1231.90L300.13,1231.90L300.13,1229.13L301.24,1229.13L301.24,1232.25L302.36,1232.25L302.36,1225.29L303.47,1225.29L303.47,1233.30L304.59,1233.30L304.59,1232.12L305.70,1232.12L305.70,1233.02L306.82,1233.02L306.82,1237.08L307.93,1237.08L307.93,1234.00L309.05,1234.00L309.05,1230.99L310.17,1230.99L310.17,1230.55L311.28,1230.55L311.28,1237.06L312.40,1237.06L312.40,1230.91L313.51,1230.91L313.51,1231.61L314.63,1231.61L314.63,1235.59L315.74,1235.59L315.74,1232.81L316.86,1232.81L316.86,1233.51L317.97,1233.51L317.97,1231.53L319.09,1231.53L319.09,1234.55L320.20,1234.55L320.20,1237.44L321.32,1237.44L321.32,1234.26L322.44,1234.26L322.44,1235.36L323.55,1235.36L323.55,1235.58L324.67,1235.58L324.67,1237.76L325.78,1237.76L325.78,1235.52L326.90,1235.52L326.90,1237.22L328.01,1237.22L328.01,1242.61L329.13,1242.61L329.13,1244.35L330.24,1244.35L330.24,1235.84L331.36,1235.84L331.36,1236.20L332.48,1236.20L332.47,1241.11L333.59,1241.11L333.59,1243.92L334.71,1243.92L334.71,1242.19L335.82,1242.19L335.82,1243.75L336.94,1243.75L336.94,1241.61L338.05,1241.61L338.05,1248.91L339.17,1248.91L339.17,1248.96L340.28,1248.96L340.28,1246.67L341.40,1246.67L341.40,1246.51L342.51,1246.51L342.51,1246.75L343.63,1246.75L343.63,1248.08L344.75,1248.08L344.75,1245.99L345.86,1245.99L345.86,1243.69L346.98,1243.69L346.98,1244.48L348.09,1244.48L348.09,1246.54L349.21,1246.54L349.21,1244.10L350.32,1244.10L350.32,1248.49L351.44,1248.49L351.44,1243.54L352.55,1243.54L352.55,1255.02L353.67,1255.02L353.67,1251.85L354.78,1251.85L354.78,1243.09L355.90,1243.09L355.90,1253.00L357.02,1253.00L357.02,1249.82L358.13,1249.82L358.13,1250.98L359.25,1250.98L359.25,1252.82L360.36,1252.82L360.36,1247.46L361.48,1247.46L361.48,1247.17L362.59,1247.17L362.59,1254.26L363.71,1254.26L363.71,1250.46L364.82,1250.46L364.82,1248.64L365.94,1248.64L365.94,1250.50L367.05,1250.50L367.05,1250.18L368.17,1250.18L368.17,1248.08L369.29,1248.08L369.29,1247.46L370.40,1247.46L370.40,1249.11L371.52,1249.11L371.52,1244.52L372.63,1244.52L372.63,1248.53L373.75,1248.53L373.75,1248.32L374.86,1248.32L374.86,1249.97L375.98,1249.97L375.98,1249.36L377.09,1249.36L377.09,1242.75L378.21,1242.75L378.21,1247.06L379.33,1247.06L379.32,1247.66L380.44,1247.66L380.44,1248.53L381.56,1248.53L381.56,1246.45L382.67,1246.45L382.67,1248.57L383.79,1248.57L383.79,1250.42L384.90,1250.42L384.90,1250.27L386.02,1250.27L386.02,1249.55L387.13,1249.55L387.13,1250.61L388.25,1250.61L388.25,1252.53L389.36,1252.53L389.36,1245.24L390.48,1245.24L390.48,1244.34L391.60,1244.34L391.60,1252.12L392.71,1252.12L392.71,1249.29L393.83,1249.29L393.83,1252.68L394.94,1252.68L394.94,1250.20L396.06,1250.20L396.06,1247.21L397.17,1247.21L397.17,1249.28L398.29,1249.28L398.29,1248.77L399.40,1248.77L399.40,1249.87L400.52,1249.87L400.52,1251.05L401.63,1251.05L401.63,1247.33L402.75,1247.33L402.75,1243.44L403.87,1243.44L403.87,1249.32L404.98,1249.32L404.98,1250.01L406.10,1250.01L406.10,1246.12L407.21,1246.12L407.21,1243.58L408.33,1243.58L408.33,1244.81L409.44,1244.81L409.44,1245.10L410.56,1245.10L410.56,1244.20L411.67,1244.20L411.67,1247.44L412.79,1247.44L412.79,1245.55L413.90,1245.55L413.90,1244.49L415.02,1244.49L415.02,1249.80L416.14,1249.80L416.14,1244.24L417.25,1244.24L417.25,1242.03L418.37,1242.03L418.37,1248.07L419.48,1248.07L419.48,1242.98L420.60,1242.98L420.60,1237.10L421.71,1237.10L421.71,1246.96L422.83,1246.96L422.83,1246.88L423.94,1246.88L423.94,1239.86L425.06,1239.86L425.06,1245.90L426.18,1245.90L426.18,1242.79L427.29,1242.79L427.29,1234.38L428.41,1234.38L428.41,1239.13L429.52,1239.13L429.52,1243.29L430.64,1243.29L430.64,1241.71L431.75,1241.71L431.75,1240.97L432.87,1240.97L432.87,1236.34L433.98,1236.34L433.98,1238.20L435.10,1238.20L435.10,1241.79L436.21,1241.79L436.21,1236.43L437.33,1236.43L437.33,1236.53L438.45,1236.53L438.45,1237.64L439.56,1237.64L439.56,1236.08L440.68,1236.08L440.68,1235.13L441.79,1235.13L441.79,1244.02L442.91,1244.02L442.91,1239.33L444.02,1239.33L444.02,1234.32L445.14,1234.32L445.14,1229.88L446.25,1229.88L446.25,1234.13L447.37,1234.13L447.37,1232.83L448.48,1232.83L448.48,1231.14L449.60,1231.14L449.60,1234.75L450.72,1234.75L450.72,1232.86L451.83,1232.86L451.83,1232.85L452.95,1232.85L452.95,1233.87L454.06,1233.87L454.06,1232.67L455.18,1232.67L455.18,1230.98L456.29,1230.98L456.29,1234.35L457.41,1234.35L457.41,1231.16L458.52,1231.16L458.52,1233.72L459.64,1233.72L459.64,1237.96L460.75,1237.96L460.75,1231.27L461.87,1231.27L461.87,1237.22L462.99,1237.22L462.99,1231.26L464.10,1231.26L464.10,1227.36L465.22,1227.36L465.22,1229.88L466.33,1229.88L466.33,1231.71L467.45,1231.71L467.45,1228.49L468.56,1228.49L468.56,1230.69L469.68,1230.69L469.68,1231.34L470.79,1231.34L470.79,1227.01L471.91,1227.01L471.91,1228.79L473.03,1228.79L473.03,1229.03L474.14,1229.03L474.14,1232.25L475.26,1232.25L475.26,1221.75L476.37,1221.75L476.37,1230.89L477.49,1230.89L477.49,1228.11L478.60,1228.11L478.60,1227.84L479.72,1227.84L479.72,1227.71L480.83,1227.71L480.83,1227.33L481.95,1227.33L481.95,1223.26L483.06,1223.26L483.06,1229.93L484.18,1229.93L484.18,1228.29L485.30,1228.29L485.30,1224.00L486.41,1224.00L486.41,1226.60L487.53,1226.60L487.53,1229.85L488.64,1229.85L488.64,1229.75L489.76,1229.75L489.76,1228.51L490.87,1228.51L490.87,1228.93L491.99,1228.93L491.99,1223.30L493.10,1223.30L493.10,1224.21L494.22,1224.21L494.22,1223.17L495.33,1223.17L495.33,1223.94L496.45,1223.94L496.45,1224.77L497.57,1224.77L497.57,1223.92L498.68,1223.92L498.68,1224.83L499.80,1224.83L499.80,1228.73L500.91,1228.73L500.91,1224.79L502.03,1224.79L502.03,1225.62L503.14,1225.62L503.14,1224.15L504.26,1224.15L504.26,1224.95L505.37,1224.95L505.37,1225.63L506.49,1225.63L506.49,1223.13L507.60,1223.13L507.60,1224.97L508.72,1224.97L508.72,1219.37L509.84,1219.37L509.84,1223.95L510.95,1223.95L510.95,1224.41L512.07,1224.41L512.07,1229.91L513.18,1229.91L513.18,1226.28L514.30,1226.28L514.30,1226.85L515.41,1226.85L515.41,1225.35L516.53,1225.35L516.53,1225.78L517.64,1225.78L517.64,1219.74L518.76,1219.74L518.76,1227.93L519.88,1227.93L519.88,1222.83L520.99,1222.83L520.99,1222.96L522.11,1222.96L522.11,1225.19L523.22,1225.19L523.22,1229.08L524.34,1229.08L524.34,1219.92L525.45,1219.92L525.45,1227.68L526.57,1227.68L526.57,1223.15L527.68,1223.15L527.68,1221.94L528.80,1221.94L528.80,1221.80L529.91,1221.80L529.91,1224.89L531.03,1224.89L531.03,1227.83L532.15,1227.83L532.15,1223.02L533.26,1223.02L533.26,1222.60L534.38,1222.60L534.38,1226.55L535.49,1226.55L535.49,1223.12L536.61,1223.12L536.61,1221.00L537.72,1221.00L537.72,1222.01L538.84,1222.01L538.84,1221.57L539.95,1221.57L539.95,1228.62L541.07,1228.62L541.07,1222.35L542.18,1222.35L542.18,1222.30L543.30,1222.30L543.30,1221.25L544.42,1221.25L544.42,1220.97L545.53,1220.97L545.53,1221.92L546.65,1221.92L546.65,1217.17L547.76,1217.17L547.76,1221.00L548.88,1221.00L548.88,1223.40L549.99,1223.40L549.99,1222.53L551.11,1222.53L551.11,1216.20L552.22,1216.20L552.22,1212.92L553.34,1212.92L553.34,1198.50L554.45,1198.50L554.45,1197.09L555.57,1197.09L555.57,1178.07L556.69,1178.07L556.69,1182.08L557.80,1182.08L557.80,1180.81L558.92,1180.81L558.92,1179.99L560.03,1179.99L560.03,1186.17L561.15,1186.17L561.15,1192.96L562.26,1192.96L562.26,1203.80L563.38,1203.80L563.38,1202.71L564.49,1202.71L564.49,1202.04L565.61,1202.04L565.61,1201.34L566.73,1201.34L566.72,1204.74L567.84,1204.74L567.84,1198.36L568.96,1198.36L568.96,1191.59L570.07,1191.59L570.07,1187.16L571.19,1187.16L571.19,1193.10L572.30,1193.10L572.30,1181.34L573.42,1181.34L573.42,1190.38L574.53,1190.38L574.53,1191.58L575.65,1191.58L575.65,1192.56L576.76,1192.56L576.76,1195.59L577.88,1195.59L577.88,1188.63L579.00,1188.63L579.00,1158.96L580.11,1158.96L580.11,1039.18L581.23,1039.18L581.23,1060.53L582.34,1060.53L582.34,1082.86L583.46,1082.86L583.46,1098.68L584.57,1098.68L584.57,1125.55L585.69,1125.55L585.69,1098.55L586.80,1098.55L586.80,1069.55L587.92,1069.55L587.92,977.87L589.03,977.87L589.03,1085.86L590.15,1085.86L590.15,1009.29L591.27,1009.29L591.27,1058.58L592.38,1058.58L592.38,1207.76L593.50,1207.76L593.50,1164.97L594.61,1164.97L594.61,1155.59L595.73,1155.59L595.73,1116.48L596.84,1116.48L596.84,1031.96L597.96,1031.96L597.96,1054.35L599.07,1054.35L599.07,1106.72L600.19,1106.72L600.19,1057.95L601.30,1057.95L601.30,1026.53L602.42,1026.53L602.42,995.90L603.54,995.90L603.54,1046.79L604.65,1046.79L604.65,1089.85L605.77,1089.85L605.77,994.52L606.88,994.52L606.88,982.18L608.00,982.18L608.00,893.92L609.11,893.92L609.11,866.09L610.23,866.09L610.23,896.93L611.34,896.93L611.34,866.09L612.46,866.09L612.46,907.38L613.57,907.38L613.57,880.91L614.69,880.91L614.69,901.55L615.81,901.55L615.81,933.74L616.92,933.74L616.92,991.78L618.04,991.78L618.04,938.21L619.15,938.21L619.15,954.54L620.27,954.54L620.27,1001.66L621.38,1001.66L621.38,1039.66L622.50,1039.66L622.50,1009.22L623.61,1009.22L623.61,1026.01L624.73,1026.01L624.73,948.68L625.85,948.68L625.85,936.64L626.96,936.64L626.96,936.86L628.08,936.86L628.08,884.12L629.19,884.12L629.19,943.42L630.31,943.42L630.31,984.54L631.42,984.54L631.42,869.69L632.54,869.69L632.54,886.60L633.65,886.60L633.65,945.52L634.77,945.52L634.77,915.49L635.88,915.49L635.88,866.09L637.00,866.09L637.00,962.55L638.12,962.55L638.12,1062.77L639.23,1062.77L639.23,1009.91L640.35,1009.91L640.35,1006.49L641.46,1006.49L641.46,1034.26L642.58,1034.26L642.58,926.07L643.69,926.07L643.69,905.75L644.81,905.75L644.81,990.32L645.92,990.32L645.92,1003.09L647.04,1003.09L647.04,985.58L648.15,985.58L648.15,1049.16L649.27,1049.16L649.27,1060.31L650.39,1060.31L650.39,1050.00L651.50,1050.00L651.50,1050.45L652.62,1050.45L652.62,1059.60L653.73,1059.60L653.73,1081.34L654.85,1081.34L654.85,1071.64L655.96,1071.64L655.96,1053.60L657.08,1053.60L657.08,1085.70L658.19,1085.70L658.19,1100.78L659.31,1100.78L659.31,1076.58L660.42,1076.58L660.42,1027.69L661.54,1027.69L661.54,1030.68L662.66,1030.68L662.66,963.52L663.77,963.52L663.77,921.11L664.89,921.11L664.89,880.51L666.00,880.51L666.00,922.09L667.12,922.09L667.12,941.33L668.23,941.33L668.23,1043.10L669.35,1043.10L669.35,1098.09L670.46,1098.09L670.46,1166.85L671.58,1166.85L671.58,1028.38L672.70,1028.38L672.70,990.48L673.81,990.48L673.81,954.82L674.93,954.82L674.93,920.18L676.04,920.18L676.04,973.77L677.16,973.77L677.16,945.42L678.27,945.42L678.27,1033.98L679.39,1033.98L679.39,1008.86L680.50,1008.86L680.50,995.24L681.62,995.24L681.62,967.06L682.73,967.06L682.73,1075.61L683.85,1075.61L683.85,1112.44L684.97,1112.44L684.97,1017.54L686.08,1017.54L686.08,1148.52L687.20,1148.52L687.20,1043.34L688.31,1043.34L688.31,1078.21L689.43,1078.21L689.43,1095.28L690.54,1095.28L690.54,1137.81L691.66,1137.81L691.66,1153.63L692.77,1153.63L692.77,1134.41L693.89,1134.41L693.89,1123.03L695.00,1123.03L695.00,1086.76L696.12,1086.76L696.12,1028.77L697.24,1028.77L697.24,970.66L698.35,970.66L698.35,1118.28L699.47,1118.28L699.47,1039.72L700.58,1039.72L700.58,1033.82L701.70,1033.82L701.70,1003.12L702.81,1003.12L702.81,1064.28L703.93,1064.28L703.93,1100.30L705.04,1100.30L705.04,1168.73L706.16,1168.73L706.16,1124.12L707.27,1124.12L707.27,1161.49L708.39,1161.49L708.39,1169.95L709.51,1169.95L709.51,1162.10L710.62,1162.10L710.62,1151.36L711.74,1151.36L711.74,1096.87L712.85,1096.87L712.85,1186.57L713.97,1186.57L713.97,1143.02L715.08,1143.02L715.08,1171.91L716.20,1171.91L716.20,1158.24L717.31,1158.24L717.31,1160.22L718.43,1160.22L718.43,1200.38L719.55,1200.38L719.55,1196.72L720.66,1196.72L720.66,1188.61L721.78,1188.61L721.78,1191.19L722.89,1191.19L722.89,1190.31L724.01,1190.31L724.01,1195.06L725.12,1195.06L725.12,1195.38L726.24,1195.38L726.24,1194.22L727.35,1194.22L727.35,1191.01L728.47,1191.01L728.47,1180.13L729.58,1180.13L729.58,1208.60L730.70,1208.60L730.70,1207.21L731.82,1207.21L731.82,1209.25L732.93,1209.25L732.93,1211.48L734.05,1211.48L734.05,1213.77L735.16,1213.77L735.16,1218.88L736.28,1218.88L736.28,1216.99L737.39,1216.99L737.39,1216.26L738.51,1216.26L738.51,1218.22L739.62,1218.22L739.62,1221.74L740.74,1221.74L740.74,1223.33L741.85,1223.33L741.85,1219.53L742.97,1219.53L742.97,1220.02L744.09,1220.02L744.09,1224.56L745.20,1224.56L745.20,1222.25L746.32,1222.25L746.32,1220.09L747.43,1220.09L747.43,1217.47L748.55,1217.47L748.55,1212.99L749.66,1212.99L749.66,1218.80L750.78,1218.80L750.78,1212.39L751.89,1212.39L751.89,1218.62L753.01,1218.62L753.01,1211.96L754.12,1211.96L754.12,1214.22L755.24,1214.22L755.24,1220.02L756.36,1220.02L756.36,1222.30L757.47,1222.30L757.47,1221.00L758.59,1221.00L758.59,1220.65L759.70,1220.65L759.70,1219.74L760.82,1219.74L760.82,1215.19L761.93,1215.19L761.93,1221.08L763.05,1221.08L763.05,1221.49L764.16,1221.49L764.16,1220.91L765.28,1220.91L765.28,1219.99L766.40,1219.99L766.40,1217.64L767.51,1217.64L767.51,1216.20L768.63,1216.20L768.63,1224.20L769.74,1224.20L769.74,1225.05L770.86,1225.05L770.86,1219.53L771.97,1219.53L771.97,1218.82L773.09,1218.82L773.09,1220.14L774.20,1220.14L774.20,1220.07L775.32,1220.07L775.32,1214.95L776.43,1214.95L776.43,1211.85L777.55,1211.85L777.55,1215.88L778.67,1215.88L778.67,1212.67L779.78,1212.67L779.78,1220.38L780.90,1220.38L780.90,1224.85L782.01,1224.85L782.01,1228.68L783.13,1228.68L783.13,1230.25L784.24,1230.25L784.24,1233.74L785.36,1233.74L785.36,1235.91L786.47,1235.91L786.47,1232.33L787.59,1232.33L787.59,1234.26L788.70,1234.26L788.70,1233.99L789.82,1233.99L789.82,1234.30L790.94,1234.30L790.94,1239.70L792.05,1239.70L792.05,1235.19L793.17,1235.19L793.17,1231.65L794.28,1231.65L794.28,1235.52L795.40,1235.52L795.40,1233.92L796.51,1233.92L796.51,1239.46L797.63,1239.46L797.63,1234.36L798.74,1234.36L798.74,1238.46L799.86,1238.46L799.86,1236.71L800.98,1236.71L800.97,1234.32L802.09,1234.32L802.09,1231.11L803.21,1231.11L803.21,1241.17L804.32,1241.17L804.32,1234.42L805.44,1234.42L805.44,1239.83L806.55,1239.83L806.55,1237.35L807.67,1237.35L807.67,1240.48L808.78,1240.48L808.78,1238.16L809.90,1238.16L809.90,1236.70L811.01,1236.70L811.01,1237.93L812.13,1237.93L812.13,1233.44L813.25,1233.44L813.25,1234.32L814.36,1234.32L814.36,1233.92L815.48,1233.92L815.48,1228.78L816.59,1228.78L816.59,1219.88L817.71,1219.88L817.71,1213.25L818.82,1213.25L818.82,1214.62L819.94,1214.62L819.94,1218.54L821.05,1218.54L821.05,1218.99L822.17,1218.99L822.17,1229.04L823.28,1229.04L823.28,1226.62L824.40,1226.62L824.40,1226.80L825.52,1226.80L825.52,1229.52L826.63,1229.52L826.63,1232.45L827.75,1232.45L827.75,1232.39L828.86,1232.39L828.86,1236.59L829.98,1236.59L829.98,1233.34L831.09,1233.34L831.09,1228.48L832.21,1228.48L832.21,1234.58L833.32,1234.58L833.32,1235.40L834.44,1235.40L834.44,1238.75L835.55,1238.75L835.55,1230.64L836.67,1230.64L836.67,1236.75L837.79,1236.75L837.79,1236.59L838.90,1236.59L838.90,1233.51L840.02,1233.51L840.02,1234.03L841.13,1234.03L841.13,1235.94L842.25,1235.94L842.25,1236.10L843.36,1236.10L843.36,1239.59L844.48,1239.59L844.48,1230.96L845.59,1230.96L845.59,1232.11L846.71,1232.11L846.71,1233.18L847.83,1233.18L847.83,1237.20L848.94,1237.20L848.94,1232.28L850.06,1232.28L850.06,1243.33L851.17,1243.33L851.17,1237.60L852.29,1237.60L852.29,1237.55L853.40,1237.55L853.40,1237.60L854.52,1237.60L854.52,1237.20L855.63,1237.20L855.63,1237.70L856.75,1237.70L856.75,1239.11L857.86,1239.11L857.86,1238.17L858.98,1238.17L858.98,1239.11L860.10,1239.11L860.10,1237.78L861.21,1237.78L861.21,1237.56L862.33,1237.56L862.33,1237.28L863.44,1237.28L863.44,1237.31L864.56,1237.31L864.56,1237.23L865.67,1237.23L865.67,1240.88L866.79,1240.88L866.79,1237.48L867.90,1237.48L867.90,1240.37L869.02,1240.37L869.02,1238.01L870.13,1238.01L870.13,1235.85L871.25,1235.85L871.25,1238.87L872.37,1238.87L872.37,1235.25L873.48,1235.25L873.48,1239.41L874.60,1239.41L874.60,1236.07L875.71,1236.07L875.71,1236.89L876.83,1236.89L876.83,1237.40L877.94,1237.40L877.94,1237.56L879.06,1237.56L879.06,1238.93L880.17,1238.93L880.17,1240.15L881.29,1240.15L881.29,1232.27L882.40,1232.27L882.40,1241.43L883.52,1241.43L883.52,1235.80L884.64,1235.80L884.64,1235.69L885.75,1235.69L885.75,1238.03L886.87,1238.03L886.87,1233.02L887.98,1233.02L887.98,1232.56L889.10,1232.56L889.10,1230.80L890.21,1230.80L890.21,1230.62L891.33,1230.62L891.33,1226.91L892.44,1226.91L892.44,1227.03L893.56,1227.03L893.56,1241.64L894.68,1241.64L894.68,1227.57L895.79,1227.57L895.79,1200.83L896.91,1200.83L896.91,1178.04L898.02,1178.04L898.02,1165.39L899.14,1165.39L899.14,1171.42L900.25,1171.42L900.25,1181.23L901.37,1181.23L901.37,1176.62L902.48,1176.62L902.48,1149.04L903.60,1149.04L903.60,1132.93L904.71,1132.93L904.71,1167.34L905.83,1167.34L905.83,1166.81L906.95,1166.81L906.95,1172.76L908.06,1172.76L908.06,1183.37L909.18,1183.37L909.18,1187.96L910.29,1187.96L910.29,1157.05L911.41,1157.05L911.41,1114.29L912.52,1114.29L912.52,1053.60L913.64,1053.60L913.64,1055.16L914.75,1055.16L914.75,1078.94L915.87,1078.94L915.87,1086.58L916.98,1086.58L916.98,1109.52L918.10,1109.52L918.10,992.30L919.22,992.30L919.22,1051.22L920.33,1051.22L920.33,1090.74L921.45,1090.74L921.45,1092.73L922.56,1092.73L922.56,1050.95L923.68,1050.95L923.68,1017.54L924.79,1017.54L924.79,1031.21L925.91,1031.21L925.91,1077.17L927.02,1077.17L927.02,988.69L928.14,988.69L928.14,1039.18L929.25,1039.18L929.25,1099.68L930.37,1099.68L930.37,1132.14L931.49,1132.14L931.49,1126.79L932.60,1126.79L932.60,1132.30L933.72,1132.30L933.72,1144.04L934.83,1144.04L934.83,1145.92L935.95,1145.92L935.95,1187.57L937.06,1187.57L937.06,1184.90L938.18,1184.90L938.18,1076.03L939.29,1076.03L939.29,1010.33L940.41,1010.33L940.41,1034.00L941.52,1034.00L941.53,1060.27L942.64,1060.27L942.64,1006.72L943.76,1006.72L943.76,1020.53L944.87,1020.53L944.87,1002.06L945.99,1002.06L945.99,1011.49L947.10,1011.49L947.10,963.45L948.22,963.45L948.22,980.32L949.33,980.32L949.33,996.45L950.45,996.45L950.45,1034.35L951.56,1034.35L951.56,1025.08L952.68,1025.08L952.68,1049.09L953.80,1049.09L953.80,1100.91L954.91,1100.91L954.91,1136.81L956.03,1136.81L956.03,1164.93L957.14,1164.93L957.14,1154.88L958.26,1154.88L958.26,1136.54L959.37,1136.54L959.37,1137.09L960.49,1137.09L960.49,1135.92L961.60,1135.92L961.60,1136.00L962.72,1136.00L962.72,1139.83L963.83,1139.83L963.83,1140.25L964.95,1140.25L964.95,1064.54L966.07,1064.54L966.07,1003.12L967.18,1003.12L967.18,1007.19L968.30,1007.19L968.30,1057.91L969.41,1057.91L969.41,1047.91L970.53,1047.91L970.53,1006.72L971.64,1006.72L971.64,1108.30L972.76,1108.30L972.76,1153.16L973.87,1153.16L973.87,1163.10L974.99,1163.10L974.99,1180.09L976.10,1180.09L976.10,1185.83L977.22,1185.83L977.22,1161.78L978.34,1161.78L978.34,1183.80L979.45,1183.80L979.45,1180.46L980.57,1180.46L980.57,1138.74L981.68,1138.74L981.68,1098.76L982.80,1098.76L982.80,1068.03L983.91,1068.03L983.91,1080.45L985.03,1080.45L985.03,1073.54L986.14,1073.54L986.14,1160.89L987.26,1160.89L987.26,1115.50L988.38,1115.50L988.38,1096.52L989.49,1096.52L989.49,1163.33L990.61,1163.33L990.61,995.90L991.72,995.90L991.72,1046.46L992.84,1046.46L992.84,1066.71L993.95,1066.71L993.95,1151.75L995.07,1151.75L995.07,1142.44L996.18,1142.44L996.18,1054.15L997.30,1054.15L997.30,1010.33L998.41,1010.33L998.41,1029.76L999.53,1029.76L999.53,1137.90L1000.65,1137.90L1000.65,1057.22L1001.76,1057.22L1001.76,1078.11L1002.88,1078.11L1002.88,1058.52L1003.99,1058.52L1003.99,1072.48L1005.11,1072.48L1005.11,1024.75L1006.22,1024.75L1006.22,1175.50L1007.34,1175.50L1007.34,1143.90L1008.45,1143.90L1008.45,1112.55L1009.57,1112.55L1009.57,1070.24L1010.68,1070.24L1010.68,1069.84L1011.80,1069.84L1011.80,1010.33L1012.92,1010.33L1012.92,1068.02L1014.03,1068.02L1014.03,1120.61L1015.15,1120.61L1015.15,1212.27L1016.26,1212.27L1016.26,1154.06L1017.38,1154.06L1017.38,1017.54L1018.49,1017.54L1018.49,1080.65L1019.61,1080.65L1019.61,1164.76L1020.72,1164.76L1020.72,1111.30L1021.84,1111.30L1021.84,1136.60L1022.95,1136.60L1022.95,1125.47L1024.07,1125.47L1024.07,1133.34L1025.19,1133.34L1025.19,1138.36L1026.30,1138.36L1026.30,1119.06L1027.42,1119.06L1027.42,1107.72L1028.53,1107.72L1028.53,1174.94L1029.65,1174.94L1029.65,1082.45L1030.76,1082.45L1030.76,1120.00L1031.88,1120.00L1031.88,1143.69L1032.99,1143.69L1032.99,1130.71L1034.11,1130.71L1034.11,1146.59L1035.22,1146.59L1035.23,1162.39L1036.34,1162.39L1036.34,1212.27L1037.46,1212.27L1037.46,1169.03L1038.57,1169.03L1038.57,1170.74L1039.69,1170.74L1039.69,1203.43L1040.80,1203.43L1040.80,1214.62L1041.92,1214.62L1041.92,1218.89L1043.03,1218.89L1043.03,1227.15L1044.15,1227.15L1044.15,1212.94L1045.26,1212.94L1045.26,1213.80L1046.38,1213.80L1046.38,1215.91L1047.50,1215.91L1047.50,1227.83L1048.61,1227.83L1048.61,1218.74L1049.73,1218.74L1049.73,1206.92L1050.84,1206.92L1050.84,1193.74L1051.96,1193.74L1051.96,1201.96L1053.07,1201.96L1053.07,1211.30L1054.19,1211.30L1054.19,1213.37L1055.30,1213.37L1055.30,1207.88L1056.42,1207.88L1056.42,1203.44L1057.53,1203.44L1057.53,1200.25L1058.65,1200.25L1058.65,1202.35L1059.77,1202.35L1059.77,1181.26L1060.88,1181.26L1060.88,1086.13L1062.00,1086.13L1062.00,1082.98L1063.11,1082.98L1063.11,1202.05L1064.23,1202.05L1064.23,1202.79L1065.34,1202.79L1065.34,1205.06L1066.46,1205.06L1066.46,1199.70L1067.57,1199.70L1067.57,1197.41L1068.69,1197.41L1068.69,1194.12L1069.80,1194.12L1069.80,1200.59L1070.92,1200.59L1070.92,1210.14L1072.04,1210.14L1072.04,1198.01L1073.15,1198.01L1073.15,1182.14L1074.27,1182.14L1074.27,1077.58L1075.38,1077.58L1075.38,1121.74L1076.50,1121.74L1076.50,1176.43L1077.61,1176.43L1077.61,1205.37L1078.73,1205.37L1078.73,1205.68L1079.84,1205.68L1079.84,1209.34L1080.96,1209.34L1080.96,1205.14L1082.07,1205.14L1082.08,1201.49L1083.19,1201.49L1083.19,1195.75L1084.31,1195.75L1084.31,1180.64L1085.42,1180.64L1085.42,1158.50L1086.54,1158.50L1086.54,1117.96L1087.65,1117.96L1087.65,1054.23L1088.77,1054.23L1088.77,1102.72L1089.88,1102.72L1089.88,1164.76L1091.00,1164.76L1091.00,1178.00L1092.11,1178.00L1092.11,1196.83L1093.23,1196.83L1093.23,1198.50L1094.35,1198.50L1094.35,1203.43L1095.46,1203.43L1095.46,1206.24L1096.58,1206.24L1096.58,1211.14L1097.69,1211.14L1097.69,1202.98L1098.81,1202.98L1098.81,1200.24L1099.92,1200.24L1099.92,1201.94L1101.04,1201.94L1101.04,1206.25L1102.15,1206.25L1102.15,1207.39L1103.27,1207.39L1103.27,1205.77L1104.38,1205.77L1104.38,1213.93L1105.50,1213.93L1105.50,1211.43L1106.62,1211.43L1106.62,1214.87L1107.73,1214.87L1107.73,1212.67L1108.85,1212.67L1108.85,1208.67L1109.96,1208.67L1109.96,1202.33L1111.08,1202.33L1111.08,1207.48L1112.19,1207.48L1112.19,1213.13L1113.31,1213.13L1113.31,1219.40L1114.42,1219.40L1114.42,1214.12L1115.54,1214.12L1115.54,1211.34L1116.65,1211.34L1116.65,1212.67L1117.77,1212.67L1117.77,1216.03L1118.89,1216.03L1118.89,1218.59L1120.00,1218.59L1120.00,1205.94L1121.12,1205.94L1121.12,1161.71L1122.23,1161.71L1122.23,1210.96L1123.35,1210.96L1123.35,1210.09L1124.46,1210.09L1124.46,1206.91L1125.58,1206.91L1125.58,1160.38L1126.69,1160.38L1126.69,1201.68L1127.81,1201.68L1127.81,1210.29L1128.92,1210.29L1128.92,1213.27L1130.04,1213.27L1130.04,1215.28L1131.16,1215.28L1131.16,1216.46L1132.27,1216.46L1132.27,1220.72L1133.39,1220.72L1133.39,1208.70L1134.50,1208.70L1134.50,1207.90L1135.62,1207.90L1135.62,1210.16L1136.73,1210.16L1136.73,1207.27L1137.85,1207.27L1137.85,1210.70L1138.96,1210.70L1138.96,1206.80L1140.08,1206.80L1140.08,1209.21L1141.20,1209.21L1141.20,1217.97L1142.31,1217.97L1142.31,1206.12L1143.43,1206.12L1143.43,1208.79L1144.54,1208.79L1144.54,1196.87L1145.66,1196.87L1145.66,1183.28L1146.77,1183.28L1146.77,1163.54L1147.89,1163.54L1147.89,1116.92L1149.00,1116.92L1149.00,1158.60L1150.12,1158.60L1150.12,1199.31L1151.23,1199.31L1151.23,1217.20L1152.35,1217.20L1152.35,1173.37L1153.47,1173.37L1153.47,1157.87L1154.58,1157.87L1154.58,1190.71L1155.70,1190.71L1155.70,1180.47L1156.81,1180.47L1156.81,1172.75L1157.93,1172.75L1157.93,1185.00L1159.04,1185.00L1159.04,1194.00L1160.16,1194.00L1160.16,1206.18L1161.27,1206.18L1161.27,1211.41L1162.39,1211.41L1162.39,1224.14L1163.50,1224.14L1163.50,1218.86L1164.62,1218.86L1164.62,1226.71L1165.74,1226.71L1165.74,1229.47L1166.85,1229.47L1166.85,1233.94L1167.97,1233.94L1167.97,1232.72L1169.08,1232.72L1169.08,1231.01L1170.20,1231.01L1170.20,1232.62L1171.31,1232.62L1171.31,1234.37L1172.43,1234.37L1172.43,1238.39L1173.54,1238.39L1173.54,1239.36L1174.66,1239.36L1174.66,1234.90L1175.77,1234.90L1175.77,1235.38L1176.89,1235.38L1176.89,1234.77L1178.01,1234.77L1178.01,1236.05L1179.12,1236.05L1179.12,1235.31L1180.24,1235.31L1180.24,1238.37L1181.35,1238.37L1181.35,1232.72L1182.47,1232.72L1182.47,1233.36L1183.58,1233.36L1183.58,1231.02L1184.70,1231.02L1184.70,1233.02L1185.81,1233.02L1185.81,1234.18L1186.93,1234.18L1186.93,1229.97L1188.05,1229.97L1188.05,1230.43L1189.16,1230.43L1189.16,1229.76L1190.28,1229.76L1190.28,1229.22L1191.39,1229.22L1191.39,1228.24L1192.51,1228.24L1192.51,1227.86L1193.62,1227.86L1193.62,1227.47L1194.74,1227.47L1194.74,1228.20L1195.85,1228.20L1195.85,1231.14L1196.97,1231.14L1196.97,1230.87L1198.08,1230.87L1198.08,1231.45L1199.20,1231.45L1199.20,1228.34L1200.32,1228.34L1200.32,1230.09L1201.43,1230.09L1201.43,1235.38L1202.55,1235.38L1202.55,1234.76L1203.66,1234.76L1203.66,1236.40L1204.78,1236.40L1204.78,1235.77L1205.89,1235.77L1205.89,1232.49L1207.01,1232.49L1207.01,1233.37L1208.12,1233.37L1208.12,1232.32L1209.24,1232.32L1209.24,1233.30L1210.35,1233.30L1210.35,1236.04L1211.47,1236.04L1211.47,1233.81L1212.59,1233.81L1212.59,1235.57L1213.70,1235.57L1213.70,1223.03L1214.82,1223.03L1214.82,1212.23L1215.93,1212.23L1215.93,1201.70L1217.05,1201.70L1217.05,1178.43L1218.16,1178.43L1218.16,1118.51L1219.28,1118.51L1219.28,1179.72L1220.39,1179.72L1220.39,1187.56L1221.51,1187.56L1221.51,1184.94L1222.62,1184.94L1222.62,1180.46L1223.74,1180.46L1223.74,1212.27L1224.86,1212.27L1224.86,1128.51L1225.97,1128.51L1225.97,1064.42L1227.09,1064.42L1227.09,1202.92L1228.20,1202.92L1228.20,1150.56L1229.32,1150.56L1229.32,1159.62L1230.43,1159.62L1230.43,1193.14L1231.55,1193.14L1231.55,1162.93L1232.66,1162.93L1232.66,1111.31L1233.78,1111.31L1233.78,1071.75L1234.90,1071.75L1234.90,1028.36L1236.01,1028.36L1236.01,1097.97L1237.13,1097.97L1237.13,1093.33L1238.24,1093.33L1238.24,1046.84L1239.36,1046.84L1239.36,1011.94L1240.47,1011.94L1240.47,995.90L1241.59,995.90L1241.59,1093.36L1242.70,1093.36L1242.70,1096.35L1243.82,1096.35L1243.82,1120.97L1244.93,1120.97L1244.93,1124.75L1246.05,1124.75L1246.05,1104.09L1247.17,1104.09L1247.17,1127.25L1248.28,1127.25L1248.28,1112.35L1249.40,1112.35L1249.40,1119.07L1250.51,1119.07L1250.51,1092.32L1251.63,1092.32L1251.63,1080.97L1252.74,1080.97L1252.74,1076.13L1253.86,1076.13L1253.86,1036.63L1254.97,1036.63L1254.97,909.36L1256.09,909.36L1256.09,988.88L1257.20,988.88L1257.20,973.70L1258.32,973.70L1258.32,909.36L1259.44,909.36L1259.44,1047.80L1260.55,1047.80L1260.55,1058.16L1261.67,1058.16L1261.67,1075.86L1262.78,1075.86L1262.78,1108.54L1263.90,1108.54L1263.90,1097.36L1265.01,1097.36L1265.01,1071.63L1266.13,1071.63L1266.13,1074.09L1267.24,1074.09L1267.24,1074.24L1268.36,1074.24L1268.36,985.09L1269.47,985.09L1269.47,988.03L1270.59,988.03L1270.59,985.09L1271.71,985.09L1271.71,1000.06L1272.82,1000.06L1272.82,1029.66L1273.94,1029.66L1273.94,1045.85L1275.05,1045.85L1275.05,1053.82L1276.17,1053.82L1276.17,1061.73L1277.28,1061.73L1277.28,1053.60L1278.40,1053.60L1278.40,1071.83L1279.51,1071.83L1279.51,1098.52L1280.63,1098.52L1280.63,1165.61L1281.75,1165.61L1281.75,1118.40L1282.86,1118.40L1282.86,1119.10L1283.98,1119.10L1283.98,1123.24L1285.09,1123.24L1285.09,1096.87L1286.21,1096.87L1286.21,1117.74L1287.32,1117.74L1287.32,1125.19L1288.44,1125.19L1288.44,1128.65L1289.55,1128.65L1289.55,1133.26L1290.67,1133.26L1290.67,1105.29L1291.78,1105.29L1291.78,1035.57L1292.90,1035.57L1292.90,1054.83L1294.02,1054.83L1294.02,1057.82L1295.13,1057.82L1295.13,1096.84L1296.25,1096.84L1296.25,1212.27L1297.36,1212.27L1297.36,977.87L1298.48,977.87L1298.48,1040.95L1299.59,1040.95L1299.59,1099.65L1300.71,1099.65L1300.71,1181.33L1301.82,1181.33L1301.82,1132.45L1302.94,1132.45L1302.94,1042.78L1304.05,1042.78L1304.05,1079.27L1305.17,1079.27L1305.17,1103.28L1306.29,1103.28L1306.29,1060.15L1307.40,1060.15L1307.40,1035.57L1308.52,1035.57L1308.52,1153.22L1309.63,1153.22L1309.63,1178.75L1310.75,1178.75L1310.75,1191.15L1311.86,1191.15L1311.86,1114.50L1312.98,1114.50L1312.98,1028.36L1314.09,1028.36L1314.09,1083.69L1315.21,1083.69L1315.21,1078.11L1316.32,1078.11L1316.33,1132.53L1317.44,1132.53L1317.44,1136.72L1318.56,1136.72L1318.56,1089.66L1319.67,1089.66L1319.67,1123.31L1320.79,1123.31L1320.79,1179.37L1321.90,1179.37L1321.90,1189.40L1323.02,1189.40L1323.02,1196.34L1324.13,1196.34L1324.13,1170.84L1325.25,1170.84L1325.25,1142.48L1326.36,1142.48L1326.36,1104.09L1327.48,1104.09L1327.48,1112.32L1328.60,1112.32L1328.60,1126.21L1329.71,1126.21L1329.71,1164.38L1330.83,1164.38L1330.83,1162.71L1331.94,1162.71L1331.94,1157.37L1333.06,1157.37L1333.06,1098.25L1334.17,1098.25L1334.17,1088.42L1335.29,1088.42L1335.29,1049.99L1336.40,1049.99L1336.40,1115.67L1337.52,1115.67L1337.52,1154.62L1338.63,1154.62L1338.63,1168.17L1339.75,1168.17L1339.75,1144.44L1340.87,1144.44L1340.87,1115.32L1341.98,1115.32L1341.98,1090.38L1343.10,1090.38L1343.10,1086.06L1344.21,1086.06L1344.21,1119.80L1345.33,1119.80L1345.33,1154.22L1346.44,1154.22L1346.44,1127.50L1347.56,1127.50L1347.56,1118.51L1348.67,1118.51L1348.67,1168.03L1349.79,1168.03L1349.79,1156.44L1350.90,1156.44L1350.90,1169.17L1352.02,1169.17L1352.02,1140.15L1353.14,1140.15L1353.14,1165.68L1354.25,1165.68L1354.25,1173.47L1355.37,1173.47L1355.37,1171.82L1356.48,1171.82L1356.48,1147.36L1357.60,1147.36L1357.60,1155.63L1358.71,1155.63L1358.71,1151.80L1359.83,1151.80L1359.83,1154.32L1360.94,1154.32L1360.94,1150.93L1362.06,1150.93L1362.06,1155.26L1363.17,1155.26L1363.17,1164.39L1364.29,1164.39L1364.29,1166.60L1365.41,1166.60L1365.41,1174.17L1366.52,1174.17L1366.52,1171.62L1367.64,1171.62L1367.64,1173.00L1368.75,1173.00L1368.75,1173.57L1369.87,1173.57L1369.87,1169.06L1370.98,1169.06L1370.98,1181.09L1372.10,1181.09L1372.10,1171.42L1373.21,1171.42L1373.21,1163.30L1374.33,1163.30L1374.33,1176.94L1375.45,1176.94L1375.45,1171.98L1376.56,1171.98L1376.56,1159.47L1377.68,1159.47L1377.68,1054.23L1378.79,1054.23L1378.79,1123.25L1379.91,1123.25L1379.91,1173.01L1381.02,1173.01L1381.02,1192.29L1382.14,1192.29L1382.14,1209.32L1383.25,1209.32L1383.25,1212.05L1384.37,1212.05L1384.37,1207.96L1385.48,1207.96L1385.48,1203.10L1386.60,1203.10L1386.60,1214.00L1387.72,1214.00L1387.72,1214.82L1388.83,1214.82L1388.83,1215.73L1389.95,1215.73L1389.95,1207.09L1391.06,1207.09L1391.06,1210.88L1392.18,1210.88L1392.18,1196.92L1393.29,1196.92L1393.29,1184.65L1394.41,1184.65L1394.41,1070.83L1395.52,1070.83L1395.52,1084.05L1396.64,1084.05L1396.64,1138.59L1397.75,1138.59L1397.75,1198.75L1398.87,1198.75L1398.87,1201.75L1399.99,1201.75L1399.99,1206.61L1401.10,1206.61L1401.10,1202.08L1402.22,1202.08L1402.22,1202.91L1403.33,1202.91L1403.33,1203.25L1404.45,1203.25L1404.45,1203.10L1405.56,1203.10L1405.56,1202.12L1406.68,1202.12L1406.68,1196.41L1407.79,1196.41L1407.79,1198.90L1408.91,1198.90L1408.91,1152.97L1410.02,1152.97L1410.02,1095.44L1411.14,1095.44L1411.14,1177.49L1412.26,1177.49L1412.26,1213.23L1413.37,1213.23L1413.37,1202.07L1414.49,1202.07L1414.49,1198.92L1415.60,1198.92L1415.60,1198.40L1416.72,1198.40L1416.72,1203.07L1417.83,1203.07L1417.83,1206.18L1418.95,1206.18L1418.95,1211.06L1420.06,1211.06L1420.06,1217.57L1421.18,1217.57L1421.18,1219.42L1422.30,1219.42L1422.30,1217.66L1423.41,1217.66L1423.41,1212.23L1424.53,1212.23L1424.53,1218.23L1425.64,1218.23L1425.64,1221.18L1426.76,1221.18L1426.76,1221.31L1427.87,1221.31L1427.87,1206.45L1428.99,1206.45L1428.99,1184.70L1430.10,1184.70L1430.10,1187.45L1431.22,1187.45L1431.22,1191.42L1432.33,1191.42L1432.33,1200.39L1433.45,1200.39L1433.45,1180.24L1434.57,1180.24L1434.57,1165.95L1435.68,1165.95L1435.68,1200.96L1436.80,1200.96L1436.80,1193.34L1437.91,1193.34L1437.91,1168.98L1439.03,1168.98L1439.03,1189.15L1440.14,1189.15L1440.14,1212.66L1441.26,1212.66L1441.26,1219.55L1442.37,1219.55L1442.37,1225.10L1443.49,1225.10L1443.49,1227.16L1444.60,1227.16L1444.60,1230.33L1445.72,1230.33L1445.72,1230.27L1446.84,1230.27L1446.84,1225.52L1447.95,1225.52L1447.95,1231.04L1449.07,1231.04L1449.07,1232.03L1450.18,1232.03L1450.18,1227.76L1451.30,1227.76L1451.30,1216.73L1452.41,1216.73L1452.41,1211.25L1453.53,1211.25L1453.53,1205.91L1454.64,1205.91L1454.64,1213.32L1455.76,1213.32L1455.76,1210.91L1456.88,1210.91L1456.88,1217.81L1457.99,1217.81L1457.99,1218.73L1459.11,1218.73L1459.11,1220.52L1460.22,1220.52L1460.22,1222.50L1461.34,1222.50L1461.34,1217.84L1462.45,1217.84L1462.45,1217.17L1463.57,1217.17L1463.57,1216.23L1464.68,1216.23L1464.68,1220.90L1465.80,1220.90L1465.80,1217.33L1466.91,1217.33L1466.91,1226.24L1468.03,1226.24L1468.03,1225.15L1469.15,1225.15L1469.15,1223.76L1470.26,1223.76L1470.26,1230.00L1471.38,1230.00L1471.38,1231.58L1472.49,1231.58L1472.49,1229.40L1473.61,1229.40L1473.61,1224.29L1474.72,1224.29L1474.72,1224.82L1475.84,1224.82L1475.84,1187.13L1476.95,1187.13L1476.95,1136.28L1478.07,1136.28L1478.07,1096.84L1479.18,1096.84L1479.18,1125.17L1480.30,1125.17L1480.30,1205.54L1481.42,1205.54L1481.42,1219.04L1482.53,1219.04L1482.53,1170.65L1483.65,1170.65L1483.65,1190.70L1484.76,1190.70L1484.76,1213.96L1485.88,1213.96L1485.88,1158.28L1486.99,1158.28L1486.99,1188.94L1488.11,1188.94L1488.11,1220.91L1489.22,1220.91L1489.22,1225.72L1490.34,1225.72L1490.34,1227.67L1491.45,1227.67L1491.45,1234.06L1492.57,1234.06L1492.57,1233.64L1493.69,1233.64L1493.69,1234.63L1494.80,1234.63L1494.80,1237.22L1495.92,1237.22L1495.92,1237.11L1497.03,1237.11L1497.03,1240.24L1498.15,1240.24L1498.15,1240.73L1499.26,1240.73L1499.26,1239.04L1500.38,1239.04L1500.38,1240.73L1501.49,1240.73L1501.49,1241.51L1502.61,1241.51L1502.61,1243.80L1503.72,1243.80L1503.73,1239.88L1504.84,1239.88L1504.84,1241.41L1505.96,1241.41L1505.96,1240.56L1507.07,1240.56L1507.07,1240.55L1508.19,1240.55L1508.19,1240.36L1509.30,1240.36L1509.30,1241.20L1510.42,1241.20L1510.42,1239.65L1511.53,1239.65L1511.53,1240.32L1512.65,1240.32L1512.65,1239.30L1513.76,1239.30L1513.76,1235.91L1514.88,1235.91L1514.88,1236.23L1516.00,1236.23L1516.00,1240.65L1517.11,1240.65L1517.11,1239.36L1518.23,1239.36L1518.23,1239.43L1519.34,1239.43L1519.34,1239.81L1520.46,1239.81L1520.46,1241.46L1521.57,1241.46L1521.57,1235.81L1522.69,1235.81L1522.69,1243.62L1523.80,1243.62L1523.80,1241.48L1524.92,1241.48L1524.92,1240.43L1526.03,1240.43L1526.03,1236.65L1527.15,1236.65L1527.15,1244.75L1528.27,1244.75L1528.27,1239.58L1529.38,1239.58L1529.38,1240.41L1530.50,1240.41L1530.50,1243.00L1531.61,1243.00L1531.61,1241.26L1532.73,1241.26L1532.73,1243.55L1533.84,1243.55L1533.84,1238.99L1534.96,1238.99L1534.96,1239.85L1536.07,1239.85L1536.07,1240.79L1537.19,1240.79L1537.19,1240.94L1538.30,1240.94L1538.30,1236.98L1539.42,1236.98L1539.42,1236.45L1540.54,1236.45L1540.54,1236.30L1541.65,1236.30L1541.65,1161.28L1542.77,1161.28L1542.77,1082.45L1543.88,1082.45L1543.88,1103.24L1545.00,1103.24L1545.00,1130.70L1546.11,1130.70L1546.11,1159.58L1547.23,1159.58L1547.23,1192.13L1548.34,1192.13L1548.34,1193.91L1549.46,1193.91L1549.46,1198.39L1550.58,1198.39L1550.58,1206.92L1551.69,1206.92L1551.69,1112.58L1552.81,1112.58L1552.81,1060.81L1553.92,1060.81L1553.92,1093.65L1555.04,1093.65L1555.04,1102.43L1556.15,1102.43L1556.15,977.87L1557.27,977.87L1557.27,1074.75L1558.38,1074.75L1558.38,1192.18L1559.50,1192.18L1559.50,1161.18L1560.61,1161.18L1560.61,1160.27L1561.73,1160.27L1561.73,981.48L1562.85,981.48L1562.85,1092.95L1563.96,1092.95L1563.96,1186.00L1565.08,1186.00L1565.08,1171.83L1566.19,1171.83L1566.19,1160.66L1567.31,1160.66L1567.31,1163.19L1568.42,1163.19L1568.42,1157.94L1569.54,1157.94L1569.54,1153.73L1570.65,1153.73L1570.65,1128.16L1571.77,1128.16L1571.77,1118.28L1572.88,1118.28L1572.88,1005.31L1574.00,1005.31L1574.00,958.41L1575.12,958.41L1575.12,927.39L1576.23,927.39L1576.23,976.81L1577.35,976.81L1577.35,1044.85L1578.46,1044.85L1578.46,1075.69L1579.58,1075.69L1579.58,1037.59L1580.69,1037.59L1580.69,967.68L1581.81,967.68L1581.81,952.63L1582.92,952.63L1582.92,1106.00L1584.04,1106.00L1584.04,1096.13L1585.15,1096.13L1585.15,1068.03L1586.27,1068.03L1586.27,1094.70L1587.39,1094.70L1587.39,1032.22L1588.50,1032.22L1588.50,955.31L1589.62,955.31L1589.62,909.36L1590.73,909.36L1590.73,943.21L1591.85,943.21L1591.85,949.31L1592.96,949.31L1592.96,1050.02L1594.08,1050.02L1594.08,1098.90L1595.19,1098.90L1595.19,1104.97L1596.31,1104.97L1596.31,1060.08L1597.42,1060.08L1597.42,978.77L1598.54,978.77L1598.54,967.06L1599.66,967.06L1599.66,1111.06L1600.77,1111.06L1600.77,1062.46L1601.89,1062.46L1601.89,1112.54L1603.00,1112.54L1603.00,1083.10L1604.12,1083.10L1604.12,1033.68L1605.23,1033.68L1605.23,1010.82L1606.35,1010.82L1606.35,955.28L1607.46,955.28L1607.46,941.81L1608.58,941.81L1608.58,1092.82L1609.70,1092.82L1609.70,1107.74L1610.81,1107.74L1610.81,1127.21L1611.93,1127.21L1611.93,1192.62L1613.04,1192.62L1613.04,1145.60L1614.16,1145.60L1614.16,1168.45L1615.27,1168.45L1615.27,1179.04L1616.39,1179.04L1616.39,1166.80L1617.50,1166.80L1617.50,1167.39L1618.62,1167.39L1618.62,1158.18L1619.73,1158.18L1619.73,1166.20L1620.85,1166.20L1620.85,1178.80L1621.97,1178.80L1621.97,1172.60L1623.08,1172.60L1623.08,1184.79L1624.20,1184.79L1624.20,1164.04L1625.31,1164.04L1625.31,1128.63L1626.43,1128.63L1626.43,1039.18L1627.54,1039.18L1627.54,1045.19L1628.66,1045.19L1628.66,1058.05L1629.77,1058.05L1629.77,1083.15L1630.89,1083.15L1630.89,1036.82L1632.00,1036.82L1632.00,1037.95L1633.12,1037.95L1633.12,974.27L1634.24,974.27L1634.24,979.07L1635.35,979.07L1635.35,991.18L1636.47,991.18L1636.47,1131.73L1637.58,1131.73L1637.58,1122.22L1638.70,1122.22L1638.70,1176.37L1639.81,1176.37L1639.81,1118.26L1640.93,1118.26L1640.93,1093.54L1642.04,1093.54L1642.04,981.48L1643.16,981.48L1643.16,1090.46L1644.27,1090.46L1644.28,1076.23L1645.39,1076.23L1645.39,1112.65L1646.51,1112.65L1646.51,1126.57L1647.62,1126.57L1647.62,1138.31L1648.74,1138.31L1648.74,1122.55L1649.85,1122.55L1649.85,1165.83L1650.97,1165.83L1650.97,1097.84L1652.08,1097.84L1652.08,1053.60L1653.20,1053.60L1653.20,1107.97L1654.31,1107.97L1654.31,1149.28L1655.43,1149.28L1655.43,1130.92L1656.55,1130.92L1656.55,1092.30L1657.66,1092.30L1657.66,1046.39L1658.78,1046.39L1658.78,1093.01L1659.89,1093.01L1659.89,1118.44L1661.01,1118.44L1661.01,1162.48L1662.12,1162.48L1662.12,1104.09L1663.24,1104.09L1663.24,1120.41L1664.35,1120.41L1664.35,1127.34L1665.47,1127.34L1665.47,1129.05L1666.58,1129.05L1666.58,1125.72L1667.70,1125.72L1667.70,1137.16L1668.82,1137.16L1668.82,1149.84L1669.93,1149.84L1669.93,1192.63L1671.05,1192.63L1671.05,1164.79L1672.16,1164.79L1672.16,1178.32L1673.28,1178.32L1673.28,1184.84L1674.39,1184.84L1674.39,1186.90L1675.51,1186.90L1675.51,1192.30L1676.62,1192.30L1676.62,1203.57L1677.74,1203.57L1677.74,1195.80L1678.85,1195.80L1678.85,1185.63L1679.97,1185.63L1679.97,1188.18L1681.09,1188.18L1681.09,1189.36L1682.20,1189.36L1682.20,1190.42L1683.32,1190.42L1683.32,1200.50L1684.43,1200.50L1684.43,1204.80L1685.55,1204.80L1685.55,1205.80L1686.66,1205.80L1686.66,1206.48L1687.78,1206.48L1687.78,1206.48L1688.89,1206.48L1688.89,1206.97L1690.01,1206.97L1690.01,1206.24L1691.12,1206.24L1691.12,1198.71L1692.24,1198.71L1692.24,1173.66L1693.36,1173.66L1693.36,1182.01L1694.47,1182.01L1694.47,1197.89L1695.59,1197.89L1695.59,1208.39L1696.70,1208.39L1696.70,1218.05L1697.82,1218.05L1697.82,1227.50L1698.93,1227.50L1698.93,1223.78L1700.05,1223.78L1700.05,1233.65L1701.16,1233.65L1701.16,1237.56L1702.28,1237.56L1702.28,1236.13L1703.40,1236.13L1703.40,1238.98L1704.51,1238.98L1704.51,1234.90L1705.63,1234.90L1705.63,1241.96L1706.74,1241.96L1706.74,1235.77L1707.86,1235.77L1707.86,1242.55L1708.97,1242.55L1708.97,1237.85L1710.09,1237.85L1710.09,1239.67L1711.20,1239.67L1711.20,1236.09L1712.32,1236.09L1712.32,1240.42L1713.43,1240.42L1713.43,1242.61L1714.55,1242.61L1714.55,1244.28L1715.67,1244.28L1715.67,1228.48L1716.78,1228.48L1716.78,1226.85L1717.90,1226.85L1717.90,1229.47L1719.01,1229.47L1719.01,1227.20L1720.13,1227.20L1720.13,1229.75L1721.24,1229.75L1721.24,1229.48L1722.36,1229.48L1722.36,1238.36L1723.47,1238.36L1723.47,1237.84L1724.59,1237.84L1724.59,1237.87L1725.70,1237.87L1725.70,1238.03L1726.82,1238.03L1726.82,1240.89L1727.94,1240.89L1727.94,1233.25L1729.05,1233.25L1729.05,1234.75L1730.17,1234.75L1730.17,1241.47L1731.28,1241.47L1731.28,1239.08L1732.40,1239.08L1732.40,1236.38L1733.51,1236.38L1733.51,1238.78L1734.63,1238.78L1734.63,1238.14L1735.74,1238.14L1735.74,1232.88L1736.86,1232.88L1736.86,1221.15L1737.97,1221.15L1737.98,1214.91L1739.09,1214.91L1739.09,1222.45L1740.21,1222.45L1740.21,1229.19L1741.32,1229.19L1741.32,1218.64L1742.44,1218.64L1742.44,1226.45L1743.55,1226.45L1743.55,1224.24L1744.67,1224.24L1744.67,1221.56L1745.78,1221.56L1745.78,1223.80L1746.90,1223.80L1746.90,1225.04L1748.01,1225.04L1748.01,1232.90L1749.13,1232.90L1749.13,1235.62L1750.25,1235.62L1750.25,1234.20L1751.36,1234.20L1751.36,1237.74L1752.48,1237.74L1752.48,1234.20L1753.59,1234.20L1753.59,1239.07L1754.71,1239.07L1754.71,1234.88L1755.82,1234.88L1755.82,1238.48L1756.94,1238.48L1756.94,1235.84L1758.05,1235.84L1758.05,1235.99L1759.17,1235.99L1759.17,1234.56L1760.28,1234.56L1760.28,1237.07L1761.40,1237.07L1761.40,1236.79L1762.52,1236.79L1762.52,1236.54L1763.63,1236.54L1763.63,1236.46L1764.75,1236.46L1764.75,1231.46L1765.86,1231.46L1765.86,1230.70L1766.98,1230.70L1766.98,1234.32L1768.09,1234.32L1768.09,1239.18L1769.21,1239.18L1769.21,1238.40L1770.32,1238.40L1770.32,1237.04L1771.44,1237.04L1771.44,1240.20L1772.55,1240.20L1772.55,1233.01L1773.67,1233.01L1773.67,1238.68L1774.79,1238.68L1774.79,1234.55L1775.90,1234.55L1775.90,1224.82L1777.02,1224.82L1777.02,1210.23L1778.13,1210.23L1778.13,1212.22L1779.25,1212.22L1779.25,1210.88L1780.36,1210.88L1780.36,1213.30L1781.48,1213.30L1781.48,1214.88L1782.59,1214.88L1782.59,1207.35L1783.71,1207.35L1783.71,1221.89L1784.82,1221.89L1784.83,1211.64L1785.94,1211.64L1785.94,1208.30L1787.06,1208.30L1787.06,1211.79L1788.17,1211.79L1788.17,1190.47L1789.29,1190.47L1789.29,1069.37L1790.40,1069.37L1790.40,1141.91L1791.52,1141.91L1791.52,1197.85L1792.63,1197.85L1792.63,1206.77L1793.75,1206.77L1793.75,1210.30L1794.86,1210.30L1794.86,1213.00L1795.98,1213.00L1795.98,1212.58L1797.10,1212.58L1797.10,1204.46L1798.21,1204.46L1798.21,1210.02L1799.33,1210.02L1799.33,1212.52L1800.44,1212.52L1800.44,1206.84L1801.56,1206.84L1801.56,1210.65L1802.67,1210.65L1802.67,1213.52L1803.79,1213.52L1803.79,1212.42L1804.90,1212.42L1804.90,1218.20L1806.02,1218.20L1806.02,1211.21L1807.13,1211.21L1807.13,1210.53L1808.25,1210.53L1808.25,1211.36L1809.37,1211.36L1809.37,1206.65L1810.48,1206.65L1810.48,1204.74L1811.60,1204.74L1811.60,1199.01L1812.71,1199.01L1812.71,1193.78L1813.83,1193.78L1813.83,1065.77L1814.94,1065.77L1814.94,1096.06L1816.06,1096.06L1816.06,1154.27L1817.17,1154.27L1817.17,1209.63L1818.29,1209.63L1818.29,1208.69L1819.40,1208.69L1819.40,1209.82L1820.52,1209.82L1820.52,1209.67L1821.64,1209.67L1821.64,1211.03L1822.75,1211.03L1822.75,1193.07L1823.87,1193.07L1823.87,1192.95L1824.98,1192.95L1824.98,1188.38L1826.10,1188.38L1826.10,1180.92L1827.21,1180.92L1827.21,1183.33L1828.33,1183.33L1828.33,1193.73L1829.44,1193.73L1829.44,1197.16L1830.56,1197.16L1830.56,1220.19L1831.67,1220.19L1831.67,1231.31L1832.79,1231.31L1832.79,1231.04L1833.91,1231.04L1833.91,1240.41L1835.02,1240.41L1835.02,1238.87L1836.14,1238.87L1836.14,1233.30L1837.25,1233.30L1837.25,1242.08L1838.37,1242.08L1838.37,1240.81L1839.48,1240.81L1839.48,1240.65L1840.60,1240.65L1840.60,1242.82L1841.71,1242.82L1841.71,1246.12L1842.83,1246.12L1842.83,1239.38L1843.95,1239.38L1843.95,1235.83L1845.06,1235.83L1845.06,1232.89L1846.18,1232.89L1846.18,1229.86L1847.29,1229.86L1847.29,1228.37L1848.41,1228.37L1848.41,1233.00L1849.52,1233.00L1849.52,1235.34L1850.64,1235.34L1850.64,1238.99L1851.75,1238.99L1851.75,1237.96L1852.87,1237.96L1852.87,1238.84L1853.98,1238.84L1853.98,1241.22L1855.10,1241.22L1855.10,1237.62L1856.22,1237.62L1856.22,1233.55L1857.33,1233.55L1857.33,1228.12L1858.45,1228.12L1858.45,1176.55L1859.56,1176.55L1859.56,1144.83L1860.68,1144.83L1860.68,1128.02L1861.79,1128.02L1861.79,1092.11L1862.91,1092.11L1862.91,1069.76L1864.02,1069.76L1864.02,1143.50L1865.14,1143.50L1865.14,1066.07L1866.25,1066.07L1866.25,1017.54L1867.37,1017.54L1867.37,1041.31L1868.49,1041.31L1868.49,1035.65L1869.60,1035.65L1869.60,1006.72L1870.72,1006.72L1870.72,1020.78L1871.83,1020.78L1871.83,1052.33L1872.95,1052.33L1872.95,1036.58L1874.06,1036.58L1874.06,1037.47L1875.18,1037.47L1875.18,1001.16L1876.29,1001.16L1876.29,941.81L1877.41,941.81L1877.41,998.37L1878.52,998.37L1878.52,1021.36L1879.64,1021.36L1879.64,1046.81L1880.76,1046.81L1880.76,1066.30L1881.87,1066.30L1881.87,1003.12L1882.99,1003.12L1882.99,1070.92L1884.10,1070.92L1884.10,1131.94L1885.22,1131.94L1885.22,1041.02L1886.33,1041.02L1886.33,998.85L1887.45,998.85L1887.45,989.86L1888.56,989.86L1888.56,938.21L1889.68,938.21L1889.68,1118.80L1890.80,1118.80L1890.80,1075.41L1891.91,1075.41L1891.91,993.07L1893.03,993.07L1893.03,1092.44L1894.14,1092.44L1894.14,927.39L1895.26,927.39L1895.26,1087.60L1896.37,1087.60L1896.37,1009.57L1897.49,1009.57L1897.49,1012.46L1898.60,1012.46L1898.60,1047.23L1899.72,1047.23L1899.72,1093.92L1900.83,1093.92L1900.83,1010.04L1901.95,1010.04L1901.95,937.09L1903.07,937.09L1903.07,928.99L1904.18,928.99L1904.18,927.39L1905.30,927.39L1905.30,984.94L1906.41,984.94L1906.41,1057.45L1907.53,1057.45L1907.53,1077.25L1908.64,1077.25L1908.64,869.69L1909.76,869.69L1909.76,967.30L1910.87,967.30L1910.87,1006.60L1911.99,1006.60L1911.99,1072.84L1913.10,1072.84L1913.10,958.65L1914.22,958.65L1914.22,934.60L1915.34,934.60L1915.34,985.47L1916.45,985.47L1916.45,1054.70L1917.57,1054.70L1917.57,1136.95L1918.68,1136.95L1918.68,1098.84L1919.80,1098.84L1919.80,1086.58L1920.91,1086.58L1920.91,1065.91L1922.03,1065.91L1922.03,1057.21L1923.14,1057.21L1923.14,1110.10L1924.26,1110.10L1924.26,1120.85L1925.37,1120.85L1925.38,1057.49L1926.49,1057.49L1926.49,1017.54L1927.61,1017.54L1927.61,1164.82L1928.72,1164.82L1928.72,1057.40L1929.84,1057.40L1929.84,1057.21L1930.95,1057.21L1930.95,1087.58L1932.07,1087.58L1932.07,1102.32L1933.18,1102.32L1933.18,1131.39L1934.30,1131.39L1934.30,1092.69L1935.41,1092.69L1935.41,1057.21L1936.53,1057.21L1936.53,1090.65L1937.65,1090.65L1937.65,1115.16L1938.76,1115.16L1938.76,1138.82L1939.88,1138.82L1939.88,1122.50L1940.99,1122.50L1940.99,1130.36L1942.11,1130.36L1942.11,1168.98L1943.22,1168.98L1943.22,1033.24L1944.34,1033.24L1944.34,970.66L1945.45,970.66L1945.45,1017.02L1946.57,1017.02L1946.57,1030.87L1947.68,1030.87L1947.68,967.06L1948.80,967.06L1948.80,1029.15L1949.92,1029.15L1949.92,1080.76L1951.03,1080.76L1951.03,1126.70L1952.15,1126.70L1952.15,1072.34L1953.26,1072.34L1953.26,1057.21L1954.38,1057.21L1954.38,1092.33L1955.49,1092.33L1955.49,1103.43L1956.61,1103.43L1956.61,1128.14L1957.72,1128.14L1957.72,1127.44L1958.84,1127.44L1958.84,1121.34L1959.95,1121.34L1959.95,1039.18L1961.07,1039.18L1961.07,1064.30L1962.19,1064.30L1962.19,1127.35L1963.30,1127.35L1963.30,1087.59L1964.42,1087.59L1964.42,1122.30L1965.53,1122.30L1965.53,1095.61L1966.65,1095.61L1966.65,1125.74L1967.76,1125.74L1967.76,1057.21L1968.88,1057.21L1968.88,1139.74L1969.99,1139.74L1969.99,1162.66L1971.11,1162.66L1971.11,1100.48L1972.22,1100.48L1972.22,1126.56L1973.34,1126.56L1973.34,1167.74L1974.46,1167.74L1974.46,1177.03L1975.57,1177.03L1975.57,1165.49L1976.69,1165.49L1976.69,1141.58L1977.80,1141.58L1977.80,1149.60L1978.92,1149.60L1978.92,1187.43L1980.03,1187.43L1980.03,1122.12L1981.15,1122.12L1981.15,1148.18L1982.26,1148.18L1982.26,1181.92L1983.38,1181.92L1983.38,1187.11L1984.50,1187.11L1984.50,1192.98L1985.61,1192.98L1985.61,1199.96L1986.73,1199.96L1986.73,1194.00L1987.84,1194.00L1987.84,1196.76L1988.96,1196.76L1988.96,1200.95L1990.07,1200.95L1990.07,1202.39L1991.19,1202.39L1991.19,1206.85L1992.30,1206.85L1992.30,1209.59L1993.42,1209.59L1993.42,1212.11L1994.53,1212.11L1994.53,1190.78L1995.65,1190.78L1995.65,1194.78L1996.77,1194.78L1996.77,1203.25L1997.88,1203.25L1997.88,1199.90L1999.00,1199.90L1999.00,1190.72L2000.11,1190.72L2000.11,1201.80L2001.23,1201.80L2001.23,1200.71L2002.34,1200.71L2002.34,1205.84L2003.46,1205.84L2003.46,1214.62L2004.57,1214.62L2004.57,1207.39L2005.69,1207.39L2005.69,1198.54L2006.80,1198.54L2006.80,1193.60L2007.92,1193.60L2007.92,1188.89L2009.04,1188.89L2009.04,1188.63L2010.15,1188.63L2010.15,1181.15L2011.27,1181.15L2011.27,1180.54L2012.38,1180.54L2012.38,1167.14L2013.50,1167.14L2013.50,1148.63L2014.61,1148.63L2014.61,1050.13L2015.73,1050.13L2015.73,1103.77L2016.84,1103.77L2016.84,1169.60L2017.96,1169.60L2017.96,1198.42L2019.07,1198.42L2019.08,1195.60L2020.19,1195.60L2020.19,1202.36L2021.31,1202.36L2021.31,1210.92L2022.42,1210.92L2022.42,1200.75L2023.54,1200.75L2023.54,1196.78L2024.65,1196.78L2024.65,1148.95L2025.77,1148.95L2025.77,1097.81L2026.88,1097.81L2026.88,1068.61L2028.00,1068.61L2028.00,1182.15L2029.11,1182.15L2029.11,1208.71L2030.23,1208.71L2030.23,1213.79L2031.35,1213.79L2031.35,1207.92L2032.46,1207.92L2032.46,1213.89L2033.58,1213.89L2033.58,1209.91L2034.69,1209.91L2034.69,1206.20L2035.81,1206.20L2035.81,1201.50L2036.92,1201.50L2036.92,1204.89L2038.04,1204.89L2038.04,1209.98L2039.15,1209.98L2039.15,1206.25L2040.27,1206.25L2040.27,1202.54L2041.38,1202.54L2041.38,1197.75L2042.50,1197.75L2042.50,1138.63L2043.62,1138.63L2043.62,1081.05L2044.73,1081.05L2044.73,1181.10L2045.85,1181.10L2045.85,1196.04L2046.96,1196.04L2046.96,1205.54L2048.08,1205.54L2048.08,1213.34L2049.19,1213.34L2049.19,1210.02L2050.31,1210.02L2050.31,1209.35L2051.42,1209.35L2051.42,1200.09L2052.54,1200.09L2052.54,1189.54L2053.65,1189.54L2053.65,1129.61L2054.77,1129.61L2054.77,1037.23L2055.89,1037.23L2055.89,1159.46L2057.00,1159.46L2057.00,1209.52L2058.12,1209.52L2058.12,1210.45L2059.23,1210.45L2059.23,1210.96L2060.35,1210.96L2060.35,1205.71L2061.46,1205.71L2061.46,1200.85L2062.58,1200.85L2062.58,1207.69L2063.69,1207.69L2063.69,1210.73L2064.81,1210.73L2064.81,1209.54L2065.93,1209.54L2065.93,1212.61L2067.04,1212.61L2067.04,1211.34L2068.16,1211.34L2068.16,1218.52L2069.27,1218.52L2069.27,1220.66L2070.39,1220.66L2070.39,1220.79L2071.50,1220.79L2071.50,1214.31L2072.62,1214.31L2072.62,1216.03L2073.73,1216.03L2073.73,1166.54L2074.85,1166.54L2074.85,1215.20L2075.96,1215.20L2075.96,1215.29L2077.08,1215.29L2077.08,1223.35L2078.20,1223.35L2078.20,1215.37L2079.31,1215.37L2079.31,1209.83L2080.43,1209.83L2080.43,1204.74L2081.54,1204.74L2081.54,1172.77L2082.66,1172.77L2082.66,1181.71L2083.77,1181.71L2083.77,1198.66L2084.89,1198.66L2084.89,1224.98L2086.00,1224.98L2086.00,1230.34L2087.12,1230.34L2087.12,1235.19L2088.23,1235.19L2088.23,1237.21L2089.35,1237.21L2089.35,1243.43L2090.47,1243.43L2090.47,1242.30L2091.58,1242.30L2091.58,1239.99L2092.70,1239.99L2092.70,1236.82L2093.81,1236.82L2093.81,1237.33L2094.93,1237.33L2094.93,1242.16L2096.04,1242.16L2096.04,1244.72L2097.16,1244.72L2097.16,1251.93L2098.27,1251.93L2098.27,1248.33L2099.39,1248.33L2099.39,1244.72L2100.50,1244.72L2100.50,1226.69L2101.62,1226.69L2101.62,1212.27L2102.74,1212.27L2102.74,1226.69L2103.85,1226.69L2103.85,1215.87L2104.97,1215.87L2104.97,1219.48L2106.08,1219.48L2106.08,1223.09L2107.20,1223.09L2107.20,1208.66L2108.31,1208.66L2108.31,1183.42L2109.43,1183.42L2109.43,1201.45L2110.54,1201.45L2110.54,1143.75L2111.66,1143.75L2111.66,1100.48L2112.78,1100.48L2112.78,1183.42L2113.89,1183.42L2113.89,1190.63L2115.01,1190.63L2115.01,1154.57L2116.12,1154.57L2116.12,1230.30L2117.24,1230.30L2117.24,1219.48L2118.35,1219.48L2118.35,1219.48L2119.47,1219.48L2119.47,1093.27L2120.58,1093.27L2120.58,1104.09L2121.70,1104.09L2121.70,1165.39L2122.81,1165.39L2122.81,1223.09L2123.93,1223.09L2123.93,1223.09L2125.05,1223.09L2125.05,1219.48L2126.16,1219.48L2126.16,1223.09L2127.28,1223.09L2127.28,1219.48L2128.39,1219.48L2128.39,1223.09L2129.51,1223.09L2129.51,1230.30L2130.62,1230.30L2130.62,1223.09L2131.74,1223.09L2131.74,1226.69L2132.85,1226.69L2132.85,1226.69L2133.97,1226.69L2133.97,1223.09L2135.08,1223.09L2135.08,1223.09L2136.20,1223.09L2136.20,1223.09L2137.32,1223.09L2137.32,1219.48L2138.43,1219.48L2138.43,1223.09L2139.55,1223.09L2139.55,1223.09L2140.66,1223.09L2140.66,1226.69L2141.78,1226.69L2141.78,1219.48L2142.89,1219.48L2142.89,1060.81L2144.01,1060.81L2144.01,1082.45L2145.12,1082.45L2145.12,1143.75L2146.24,1143.75L2146.24,1223.09L2147.35,1223.09L2147.35,1194.24L2148.47,1194.24L2148.47,1075.24L2149.59,1075.24L2149.59,1104.09L2150.70,1104.09L2150.70,1208.66L2151.82,1208.66L2151.82,1219.48L2152.93,1219.48L2152.93,1223.09L2154.05,1223.09L2154.05,1223.09L2155.16,1223.09L2155.16,1223.09L2156.28,1223.09L2156.28,1208.66L2157.39,1208.66L2157.39,1223.09L2158.51,1223.09L2158.51,1223.09L2159.63,1223.09L2159.63,1219.48L2160.74,1219.48L2160.74,1223.09L2161.86,1223.09L2161.86,1223.09L2162.97,1223.09L2162.97,1215.87L2164.09,1215.87L2164.09,1226.69L2165.20,1226.69L2165.20,1223.09L2166.32,1223.09L2166.32,1219.48L2167.43,1219.48L2167.43,1215.87L2168.55,1215.87L2168.55,1219.48L2169.66,1219.48L2169.66,1215.87L2170.78,1215.87L2170.78,1219.48L2171.90,1219.48L2171.90,1205.06L2173.01,1205.06L2173.01,1176.21L2174.13,1176.21L2174.13,1169.00L2175.24,1169.00L2175.24,1190.63L2176.36,1190.63L2176.36,1201.45L2177.47,1201.45L2177.47,1212.27L2178.59,1212.27L2178.59,1208.66L2179.70,1208.66L2179.70,1219.48L2180.82,1219.48L2180.82,1215.87L2181.93,1215.87L2181.93,1212.27L2183.05,1212.27L2183.05,1201.45L2184.17,1201.45L2184.17,1201.45L2185.28,1201.45L2185.28,1208.66L2186.40,1208.66L2186.40,1212.27L2187.51,1212.27L2187.51,1179.81L2188.63,1179.81L2188.63,1187.03L2189.74,1187.03L2189.74,1179.81L2190.86,1179.81L2190.86,1172.60L2191.97,1172.60L2191.97,1201.45L2193.09,1201.45L2193.09,1212.27L2194.20,1212.27L2194.20,1223.09L2195.32,1223.09L2195.32,1223.09L2196.44,1223.09L2196.44,1230.30L2197.55,1230.30L2197.55,1226.69L2198.67,1226.69L2198.67,1215.87L2199.78,1215.87L2199.78,1215.87L2200.90,1215.87L2200.90,1230.30L2202.01,1230.30L2202.01,1223.09L2203.13,1223.09L2203.13,1230.30L2204.24,1230.30L2204.24,1223.09L2205.36,1223.09L2205.36,1237.51L2206.48,1237.51L2206.48,1223.09L2207.59,1223.09L2207.59,1223.09L2208.71,1223.09L2208.71,1226.69L2209.82,1226.69L2209.82,1226.69L2210.94,1226.69L2210.94,1223.09L2212.05,1223.09L2212.05,1226.69L2213.17,1226.69L2213.17,1233.90L2214.28,1233.90L2214.28,1223.09L2215.40,1223.09L2215.40,1226.69L2216.51,1226.69L2216.51,1226.69L2217.63,1226.69L2217.63,1226.69L2218.75,1226.69L2218.75,1230.30L2219.86,1230.30L2219.86,1237.51L2220.98,1237.51L2220.98,1230.30L2222.09,1230.30L2222.09,1230.30L2223.21,1230.30L2223.21,1230.30L2224.32,1230.30L2224.32,1226.69L2225.44,1226.69L2225.44,1230.30L2226.55,1230.30L2226.55,1233.90L2227.67,1233.90L2227.67,1226.69L2228.78,1226.69L2228.78,1233.90L2229.90,1233.90L2229.90,1215.87L2231.02,1215.87L2231.02,1219.48L2232.13,1219.48L2232.13,1226.69L2233.25,1226.69L2233.25,1233.90L2234.36,1233.90L2234.36,1215.87L2235.48,1215.87L2235.48,1230.30L2236.59,1230.30L2236.59,1219.48L2237.71,1219.48L2237.71,1226.69L2238.82,1226.69L2238.82,1223.09L2239.94,1223.09L2239.94,1219.48L2241.05,1219.48L2241.05,1233.90L2242.17,1233.90L2242.17,1233.90L2243.29,1233.90L2243.29,1237.51L2244.40,1237.51L2244.40,1230.30L2245.52,1230.30L2245.52,1223.09L2246.63,1223.09L2246.63,1226.69L2247.75,1226.69L2247.75,1230.30L2248.86,1230.30L2248.86,1230.30L2249.98,1230.30L2249.98,1230.30L2251.09,1230.30L2251.09,1230.30L2252.21,1230.30L2252.21,1233.90L2253.33,1233.90L2253.33,1226.69L2254.44,1226.69L2254.44,1230.30L2255.56,1230.30L2255.56,1241.12L2256.67,1241.12L2256.67,1219.48L2257.79,1219.48L2257.79,1237.51L2258.90,1237.51L2258.90,1233.90L2260.02,1233.90L2260.02,1244.72L2261.13,1244.72L2261.13,1233.90L2262.25,1233.90L2262.25,1241.12L2263.36,1241.12L2263.36,1241.12L2264.48,1241.12L2264.48,1244.72L2265.60,1244.72L2265.60,1237.51L2266.71,1237.51L2266.71,1241.12L2267.83,1241.12L2267.83,1251.93L2268.94,1251.93L2268.94,1230.30L2270.06,1230.30L2270.06,1241.12L2271.17,1241.12L2271.17,1241.12L2272.29,1241.12L2272.29,1237.51L2273.40,1237.51L2273.40,1248.33L2274.52,1248.33L2274.52,1248.33L2275.63,1248.33L2275.63,1248.33L2276.75,1248.33L2276.75,1241.12L2277.87,1241.12L2277.87,1255.54L2278.98,1255.54L2278.98,1241.12L2280.10,1241.12L2280.10,1248.33L2281.21,1248.33L2281.21,1248.33L2282.33,1248.33L2282.33,1251.93L2283.44,1251.93L2283.44,1251.93L2284.56,1251.93L2284.56,1251.93L2285.67,1251.93L2285.67,1262.75L2286.79,1262.75L2286.79,1251.93L2287.90,1251.93L2287.90,1259.15L2289.02,1259.15L2289.02,1248.33L2290.14,1248.33L2290.14,1251.93L2291.25,1251.93L2291.25,1255.54L2292.37,1255.54L2292.37,1255.54L2293.48,1255.54L2293.48,1255.54L2294.60,1255.54L2294.60,1251.93L2295.71,1251.93L2295.71,1262.75L2296.83,1262.75L2296.83,1251.93L2297.94,1251.93L2297.94,1262.75L2299.06,1262.75L2299.06,1248.33L2300.18,1248.33L2300.18,1259.15L2301.29,1259.15L2301.29,1259.15L2302.41,1259.15L2302.41,1251.93L2303.52,1251.93L2303.52,1259.15L2304.64,1259.15L2304.64,1259.15L2305.75,1259.15L2305.75,1251.93L2306.87,1251.93L2306.87,1259.15L2307.98,1259.15L2307.98,1259.15L2309.10,1259.15L2309.10,1259.15L2310.21,1259.15L2310.21,1259.15L2311.33,1259.15L2311.33,1255.54L2312.45,1255.54L2312.45,1255.54L2313.56,1255.54L2313.56,1255.54L2314.68,1255.54L2314.68,1259.15L2315.79,1259.15L2315.79,1262.75L2316.91,1262.75L2316.91,1262.75L2318.02,1262.75L2318.02,1320.45Z" fill="#a0ecc4"/>
<path d="M570.07,1320.45L570.07,1187.16L571.19,1187.16L571.19,1193.10L572.30,1193.10L572.30,1181.34L573.42,1181.34L573.42,1190.38L574.53,1190.38L574.53,1191.58L575.65,1191.58L575.65,1192.56L576.76,1192.56L576.76,1195.59L577.88,1195.59L577.88,1188.63L579.00,1188.63L579.00,1158.96L580.11,1158.96L580.11,1039.18L581.23,1039.18L581.23,1060.53L582.34,1060.53L582.34,1082.86L583.46,1082.86L583.46,1098.68L584.57,1098.68L584.57,1125.55L585.69,1125.55L585.69,1098.55L586.80,1098.55L586.80,1069.55L587.92,1069.55L587.92,977.87L589.03,977.87L589.03,1085.86L590.15,1085.86L590.15,1009.29L591.27,1009.29L591.27,1058.58L592.38,1058.58L592.38,1207.76L593.50,1207.76L593.50,1164.97L594.61,1164.97L594.61,1155.59L595.73,1155.59L595.73,1116.48L596.84,1116.48L596.84,1031.96L597.96,1031.96L597.96,1054.35L599.07,1054.35L599.07,1106.72L600.19,1106.72L600.19,1057.95L601.30,1057.95L601.30,1026.53L602.42,1026.53L602.42,995.90L603.54,995.90L603.54,1046.79L604.65,1046.79L604.65,1089.85L605.77,1089.85L605.77,994.52L606.88,994.52L606.88,982.18L608.00,982.18L608.00,893.92L609.11,893.92L609.11,866.09L610.23,866.09L610.23,896.93L611.34,896.93L611.34,866.09L612.46,866.09L612.46,907.38L613.57,907.38L613.57,880.91L614.69,880.91L614.69,901.55L615.81,901.55L615.81,933.74L616.92,933.74L616.92,991.78L618.04,991.78L618.04,938.21L619.15,938.21L619.15,954.54L620.27,954.54L620.27,1001.66L621.38,1001.66L621.38,1039.66L622.50,1039.66L622.50,1009.22L623.61,1009.22L623.61,1026.01L624.73,1026.01L624.73,948.68L625.85,948.68L625.85,936.64L626.96,936.64L626.96,936.86L628.08,936.86L628.08,884.12L629.19,884.12L629.19,943.42L630.31,943.42L630.31,984.54L631.42,984.54L631.42,869.69L632.54,869.69L632.54,886.60L633.65,886.60L633.65,945.52L634.77,945.52L634.77,915.49L635.88,915.49L635.88,866.09L637.00,866.09L637.00,962.55L638.12,962.55L638.12,1062.77L639.23,1062.77L639.23,1009.91L640.35,1009.91L640.35,1006.49L641.46,1006.49L641.46,1034.26L642.58,1034.26L642.58,926.07L643.69,926.07L643.69,905.75L644.81,905.75L644.81,990.32L645.92,990.32L645.92,1003.09L647.04,1003.09L647.04,985.58L648.15,985.58L648.15,1049.16L649.27,1049.16L649.27,1060.31L650.39,1060.31L650.39,1050.00L651.50,1050.00L651.50,1050.45L652.62,1050.45L652.62,1059.60L653.73,1059.60L653.73,1081.34L654.85,1081.34L654.85,1071.64L655.96,1071.64L655.96,1053.60L657.08,1053.60L657.08,1085.70L658.19,1085.70L658.19,1100.78L659.31,1100.78L659.31,1076.58L660.42,1076.58L660.42,1027.69L661.54,1027.69L661.54,1030.68L662.66,1030.68L662.66,963.52L663.77,963.52L663.77,921.11L664.89,921.11L664.89,880.51L666.00,880.51L666.00,922.09L667.12,922.09L667.12,941.33L668.23,941.33L668.23,1043.10L669.35,1043.10L669.35,1098.09L670.46,1098.09L670.46,1166.85L671.58,1166.85L671.58,1028.38L672.70,1028.38L672.70,990.48L673.81,990.48L673.81,954.82L674.93,954.82L674.93,920.18L676.04,920.18L676.04,973.77L677.16,973.77L677.16,945.42L678.27,945.42L678.27,1033.98L679.39,1033.98L679.39,1008.86L680.50,1008.86L680.50,995.24L681.62,995.24L681.62,967.06L682.73,967.06L682.73,1075.61L683.85,1075.61L683.85,1112.44L684.97,1112.44L684.97,1017.54L686.08,1017.54L686.08,1148.52L687.20,1148.52L687.20,1043.34L688.31,1043.34L688.31,1078.21L689.43,1078.21L689.43,1095.28L690.54,1095.28L690.54,1137.81L691.66,1137.81L691.66,1153.63L692.77,1153.63L692.77,1134.41L693.89,1134.41L693.89,1123.03L695.00,1123.03L695.00,1086.76L696.12,1086.76L696.12,1028.77L697.24,1028.77L697.24,970.66L698.35,970.66L698.35,1118.28L699.47,1118.28L699.47,1039.72L700.58,1039.72L700.58,1033.82L701.70,1033.82L701.70,1003.12L702.81,1003.12L702.81,1064.28L703.93,1064.28L703.93,1100.30L705.04,1100.30L705.04,1168.73L706.16,1168.73L706.16,1124.12L707.27,1124.12L707.27,1161.49L708.39,1161.49L708.39,1169.95L709.51,1169.95L709.51,1162.10L710.62,1162.10L710.62,1151.36L711.74,1151.36L711.74,1096.87L712.85,1096.87L712.85,1186.57L713.97,1186.57L713.97,1143.02L715.08,1143.02L715.08,1171.91L716.20,1171.91L716.20,1158.24L717.31,1158.24L717.31,1320.45Z" fill="#23916f"/>
<path d="M891.33,1320.45L891.33,1226.91L892.44,1226.91L892.44,1227.03L893.56,1227.03L893.56,1241.64L894.68,1241.64L894.68,1227.57L895.79,1227.57L895.79,1200.83L896.91,1200.83L896.91,1178.04L898.02,1178.04L898.02,1165.39L899.14,1165.39L899.14,1171.42L900.25,1171.42L900.25,1181.23L901.37,1181.23L901.37,1176.62L902.48,1176.62L902.48,1149.04L903.60,1149.04L903.60,1132.93L904.71,1132.93L904.71,1167.34L905.83,1167.34L905.83,1166.81L906.95,1166.81L906.95,1172.76L908.06,1172.76L908.06,1183.37L909.18,1183.37L909.18,1187.96L910.29,1187.96L910.29,1157.05L911.41,1157.05L911.41,1114.29L912.52,1114.29L912.52,1053.60L913.64,1053.60L913.64,1055.16L914.75,1055.16L914.75,1078.94L915.87,1078.94L915.87,1086.58L916.98,1086.58L916.98,1109.52L918.10,1109.52L918.10,992.30L919.22,992.30L919.22,1051.22L920.33,1051.22L920.33,1090.74L921.45,1090.74L921.45,1092.73L922.56,1092.73L922.56,1050.95L923.68,1050.95L923.68,1017.54L924.79,1017.54L924.79,1031.21L925.91,1031.21L925.91,1077.17L927.02,1077.17L927.02,988.69L928.14,988.69L928.14,1039.18L929.25,1039.18L929.25,1099.68L930.37,1099.68L930.37,1132.14L931.49,1132.14L931.49,1126.79L932.60,1126.79L932.60,1132.30L933.72,1132.30L933.72,1144.04L934.83,1144.04L934.83,1145.92L935.95,1145.92L935.95,1187.57L937.06,1187.57L937.06,1184.90L938.18,1184.90L938.18,1076.03L939.29,1076.03L939.29,1010.33L940.41,1010.33L940.41,1034.00L941.52,1034.00L941.53,1060.27L942.64,1060.27L942.64,1006.72L943.76,1006.72L943.76,1020.53L944.87,1020.53L944.87,1002.06L945.99,1002.06L945.99,1011.49L947.10,1011.49L947.10,963.45L948.22,963.45L948.22,980.32L949.33,980.32L949.33,996.45L950.45,996.45L950.45,1034.35L951.56,1034.35L951.56,1025.08L952.68,1025.08L952.68,1049.09L953.80,1049.09L953.80,1100.91L954.91,1100.91L954.91,1136.81L956.03,1136.81L956.03,1164.93L957.14,1164.93L957.14,1154.88L958.26,1154.88L958.26,1136.54L959.37,1136.54L959.37,1137.09L960.49,1137.09L960.49,1135.92L961.60,1135.92L961.60,1136.00L962.72,1136.00L962.72,1139.83L963.83,1139.83L963.83,1140.25L964.95,1140.25L964.95,1064.54L966.07,1064.54L966.07,1003.12L967.18,1003.12L967.18,1007.19L968.30,1007.19L968.30,1057.91L969.41,1057.91L969.41,1047.91L970.53,1047.91L970.53,1006.72L971.64,1006.72L971.64,1108.30L972.76,1108.30L972.76,1153.16L973.87,1153.16L973.87,1163.10L974.99,1163.10L974.99,1180.09L976.10,1180.09L976.10,1185.83L977.22,1185.83L977.22,1161.78L978.34,1161.78L978.34,1183.80L979.45,1183.80L979.45,1180.46L980.57,1180.46L980.57,1138.74L981.68,1138.74L981.68,1098.76L982.80,1098.76L982.80,1068.03L983.91,1068.03L983.91,1080.45L985.03,1080.45L985.03,1073.54L986.14,1073.54L986.14,1160.89L987.26,1160.89L987.26,1115.50L988.38,1115.50L988.38,1096.52L989.49,1096.52L989.49,1163.33L990.61,1163.33L990.61,995.90L991.72,995.90L991.72,1046.46L992.84,1046.46L992.84,1066.71L993.95,1066.71L993.95,1151.75L995.07,1151.75L995.07,1142.44L996.18,1142.44L996.18,1054.15L997.30,1054.15L997.30,1010.33L998.41,1010.33L998.41,1029.76L999.53,1029.76L999.53,1137.90L1000.65,1137.90L1000.65,1057.22L1001.76,1057.22L1001.76,1078.11L1002.88,1078.11L1002.88,1058.52L1003.99,1058.52L1003.99,1072.48L1005.11,1072.48L1005.11,1024.75L1006.22,1024.75L1006.22,1175.50L1007.34,1175.50L1007.34,1143.90L1008.45,1143.90L1008.45,1112.55L1009.57,1112.55L1009.57,1070.24L1010.68,1070.24L1010.68,1069.84L1011.80,1069.84L1011.80,1010.33L1012.92,1010.33L1012.92,1068.02L1014.03,1068.02L1014.03,1120.61L1015.15,1120.61L1015.15,1212.27L1016.26,1212.27L1016.26,1154.06L1017.38,1154.06L1017.38,1017.54L1018.49,1017.54L1018.49,1080.65L1019.61,1080.65L1019.61,1164.76L1020.72,1164.76L1020.72,1111.30L1021.84,1111.30L1021.84,1136.60L1022.95,1136.60L1022.95,1125.47L1024.07,1125.47L1024.07,1133.34L1025.19,1133.34L1025.19,1138.36L1026.30,1138.36L1026.30,1119.06L1027.42,1119.06L1027.42,1107.72L1028.53,1107.72L1028.53,1174.94L1029.65,1174.94L1029.65,1082.45L1030.76,1082.45L1030.76,1120.00L1031.88,1120.00L1031.88,1143.69L1032.99,1143.69L1032.99,1130.71L1034.11,1130.71L1034.11,1146.59L1035.22,1146.59L1035.23,1162.39L1036.34,1162.39L1036.34,1212.27L1037.46,1212.27L1037.46,1169.03L1038.57,1169.03L1038.57,1320.45Z" fill="#23916f"/>
<path d="M1212.59,1320.45L1212.59,1235.57L1213.70,1235.57L1213.70,1223.03L1214.82,1223.03L1214.82,1212.23L1215.93,1212.23L1215.93,1201.70L1217.05,1201.70L1217.05,1178.43L1218.16,1178.43L1218.16,1118.51L1219.28,1118.51L1219.28,1179.72L1220.39,1179.72L1220.39,1187.56L1221.51,1187.56L1221.51,1184.94L1222.62,1184.94L1222.62,1180.46L1223.74,1180.46L1223.74,1212.27L1224.86,1212.27L1224.86,1128.51L1225.97,1128.51L1225.97,1064.42L1227.09,1064.42L1227.09,1202.92L1228.20,1202.92L1228.20,1150.56L1229.32,1150.56L1229.32,1159.62L1230.43,1159.62L1230.43,1193.14L1231.55,1193.14L1231.55,1162.93L1232.66,1162.93L1232.66,1111.31L1233.78,1111.31L1233.78,1071.75L1234.90,1071.75L1234.90,1028.36L1236.01,1028.36L1236.01,1097.97L1237.13,1097.97L1237.13,1093.33L1238.24,1093.33L1238.24,1046.84L1239.36,1046.84L1239.36,1011.94L1240.47,1011.94L1240.47,995.90L1241.59,995.90L1241.59,1093.36L1242.70,1093.36L1242.70,1096.35L1243.82,1096.35L1243.82,1120.97L1244.93,1120.97L1244.93,1124.75L1246.05,1124.75L1246.05,1104.09L1247.17,1104.09L1247.17,1127.25L1248.28,1127.25L1248.28,1112.35L1249.40,1112.35L1249.40,1119.07L1250.51,1119.07L1250.51,1092.32L1251.63,1092.32L1251.63,1080.97L1252.74,1080.97L1252.74,1076.13L1253.86,1076.13L1253.86,1036.63L1254.97,1036.63L1254.97,909.36L1256.09,909.36L1256.09,988.88L1257.20,988.88L1257.20,973.70L1258.32,973.70L1258.32,909.36L1259.44,909.36L1259.44,1047.80L1260.55,1047.80L1260.55,1058.16L1261.67,1058.16L1261.67,1075.86L1262.78,1075.86L1262.78,1108.54L1263.90,1108.54L1263.90,1097.36L1265.01,1097.36L1265.01,1071.63L1266.13,1071.63L1266.13,1074.09L1267.24,1074.09L1267.24,1074.24L1268.36,1074.24L1268.36,985.09L1269.47,985.09L1269.47,988.03L1270.59,988.03L1270.59,985.09L1271.71,985.09L1271.71,1000.06L1272.82,1000.06L1272.82,1029.66L1273.94,1029.66L1273.94,1045.85L1275.05,1045.85L1275.05,1053.82L1276.17,1053.82L1276.17,1061.73L1277.28,1061.73L1277.28,1053.60L1278.40,1053.60L1278.40,1071.83L1279.51,1071.83L1279.51,1098.52L1280.63,1098.52L1280.63,1165.61L1281.75,1165.61L1281.75,1118.40L1282.86,1118.40L1282.86,1119.10L1283.98,1119.10L1283.98,1123.24L1285.09,1123.24L1285.09,1096.87L1286.21,1096.87L1286.21,1117.74L1287.32,1117.74L1287.32,1125.19L1288.44,1125.19L1288.44,1128.65L1289.55,1128.65L1289.55,1133.26L1290.67,1133.26L1290.67,1105.29L1291.78,1105.29L1291.78,1035.57L1292.90,1035.57L1292.90,1054.83L1294.02,1054.83L1294.02,1057.82L1295.13,1057.82L1295.13,1096.84L1296.25,1096.84L1296.25,1212.27L1297.36,1212.27L1297.36,977.87L1298.48,977.87L1298.48,1040.95L1299.59,1040.95L1299.59,1099.65L1300.71,1099.65L1300.71,1181.33L1301.82,1181.33L1301.82,1132.45L1302.94,1132.45L1302.94,1042.78L1304.05,1042.78L1304.05,1079.27L1305.17,1079.27L1305.17,1103.28L1306.29,1103.28L1306.29,1060.15L1307.40,1060.15L1307.40,1035.57L1308.52,1035.57L1308.52,1153.22L1309.63,1153.22L1309.63,1178.75L1310.75,1178.75L1310.75,1191.15L1311.86,1191.15L1311.86,1114.50L1312.98,1114.50L1312.98,1028.36L1314.09,1028.36L1314.09,1083.69L1315.21,1083.69L1315.21,1078.11L1316.32,1078.11L1316.33,1132.53L1317.44,1132.53L1317.44,1136.72L1318.56,1136.72L1318.56,1089.66L1319.67,1089.66L1319.67,1123.31L1320.79,1123.31L1320.79,1179.37L1321.90,1179.37L1321.90,1189.40L1323.02,1189.40L1323.02,1196.34L1324.13,1196.34L1324.13,1170.84L1325.25,1170.84L1325.25,1142.48L1326.36,1142.48L1326.36,1104.09L1327.48,1104.09L1327.48,1112.32L1328.60,1112.32L1328.60,1126.21L1329.71,1126.21L1329.71,1164.38L1330.83,1164.38L1330.83,1162.71L1331.94,1162.71L1331.94,1157.37L1333.06,1157.37L1333.06,1098.25L1334.17,1098.25L1334.17,1088.42L1335.29,1088.42L1335.29,1049.99L1336.40,1049.99L1336.40,1115.67L1337.52,1115.67L1337.52,1154.62L1338.63,1154.62L1338.63,1168.17L1339.75,1168.17L1339.75,1144.44L1340.87,1144.44L1340.87,1115.32L1341.98,1115.32L1341.98,1090.38L1343.10,1090.38L1343.10,1086.06L1344.21,1086.06L1344.21,1119.80L1345.33,1119.80L1345.33,1154.22L1346.44,1154.22L1346.44,1127.50L1347.56,1127.50L1347.56,1118.51L1348.67,1118.51L1348.67,1168.03L1349.79,1168.03L1349.79,1156.44L1350.90,1156.44L1350.90,1169.17L1352.02,1169.17L1352.02,1140.15L1353.14,1140.15L1353.14,1165.68L1354.25,1165.68L1354.25,1173.47L1355.37,1173.47L1355.37,1171.82L1356.48,1171.82L1356.48,1147.36L1357.60,1147.36L1357.60,1155.63L1358.71,1155.63L1358.71,1151.80L1359.83,1151.80L1359.83,1320.45Z" fill="#23916f"/>
<path d="M1533.84,1320.45L1533.84,1238.99L1534.96,1238.99L1534.96,1239.85L1536.07,1239.85L1536.07,1240.79L1537.19,1240.79L1537.19,1240.94L1538.30,1240.94L1538.30,1236.98L1539.42,1236.98L1539.42,1236.45L1540.54,1236.45L1540.54,1236.30L1541.65,1236.30L1541.65,1161.28L1542.77,1161.28L1542.77,1082.45L1543.88,1082.45L1543.88,1103.24L1545.00,1103.24L1545.00,1130.70L1546.11,1130.70L1546.11,1159.58L1547.23,1159.58L1547.23,1192.13L1548.34,1192.13L1548.34,1193.91L1549.46,1193.91L1549.46,1198.39L1550.58,1198.39L1550.58,1206.92L1551.69,1206.92L1551.69,1112.58L1552.81,1112.58L1552.81,1060.81L1553.92,1060.81L1553.92,1093.65L1555.04,1093.65L1555.04,1102.43L1556.15,1102.43L1556.15,977.87L1557.27,977.87L1557.27,1074.75L1558.38,1074.75L1558.38,1192.18L1559.50,1192.18L1559.50,1161.18L1560.61,1161.18L1560.61,1160.27L1561.73,1160.27L1561.73,981.48L1562.85,981.48L1562.85,1092.95L1563.96,1092.95L1563.96,1186.00L1565.08,1186.00L1565.08,1171.83L1566.19,1171.83L1566.19,1160.66L1567.31,1160.66L1567.31,1163.19L1568.42,1163.19L1568.42,1157.94L1569.54,1157.94L1569.54,1153.73L1570.65,1153.73L1570.65,1128.16L1571.77,1128.16L1571.77,1118.28L1572.88,1118.28L1572.88,1005.31L1574.00,1005.31L1574.00,958.41L1575.12,958.41L1575.12,927.39L1576.23,927.39L1576.23,976.81L1577.35,976.81L1577.35,1044.85L1578.46,1044.85L1578.46,1075.69L1579.58,1075.69L1579.58,1037.59L1580.69,1037.59L1580.69,967.68L1581.81,967.68L1581.81,952.63L1582.92,952.63L1582.92,1106.00L1584.04,1106.00L1584.04,1096.13L1585.15,1096.13L1585.15,1068.03L1586.27,1068.03L1586.27,1094.70L1587.39,1094.70L1587.39,1032.22L1588.50,1032.22L1588.50,955.31L1589.62,955.31L1589.62,909.36L1590.73,909.36L1590.73,943.21L1591.85,943.21L1591.85,949.31L1592.96,949.31L1592.96,1050.02L1594.08,1050.02L1594.08,1098.90L1595.19,1098.90L1595.19,1104.97L1596.31,1104.97L1596.31,1060.08L1597.42,1060.08L1597.42,978.77L1598.54,978.77L1598.54,967.06L1599.66,967.06L1599.66,1111.06L1600.77,1111.06L1600.77,1062.46L1601.89,1062.46L1601.89,1112.54L1603.00,1112.54L1603.00,1083.10L1604.12,1083.10L1604.12,1033.68L1605.23,1033.68L1605.23,1010.82L1606.35,1010.82L1606.35,955.28L1607.46,955.28L1607.46,941.81L1608.58,941.81L1608.58,1092.82L1609.70,1092.82L1609.70,1107.74L1610.81,1107.74L1610.81,1127.21L1611.93,1127.21L1611.93,1192.62L1613.04,1192.62L1613.04,1145.60L1614.16,1145.60L1614.16,1168.45L1615.27,1168.45L1615.27,1179.04L1616.39,1179.04L1616.39,1166.80L1617.50,1166.80L1617.50,1167.39L1618.62,1167.39L1618.62,1158.18L1619.73,1158.18L1619.73,1166.20L1620.85,1166.20L1620.85,1178.80L1621.97,1178.80L1621.97,1172.60L1623.08,1172.60L1623.08,1184.79L1624.20,1184.79L1624.20,1164.04L1625.31,1164.04L1625.31,1128.63L1626.43,1128.63L1626.43,1039.18L1627.54,1039.18L1627.54,1045.19L1628.66,1045.19L1628.66,1058.05L1629.77,1058.05L1629.77,1083.15L1630.89,1083.15L1630.89,1036.82L1632.00,1036.82L1632.00,1037.95L1633.12,1037.95L1633.12,974.27L1634.24,974.27L1634.24,979.07L1635.35,979.07L1635.35,991.18L1636.47,991.18L1636.47,1131.73L1637.58,1131.73L1637.58,1122.22L1638.70,1122.22L1638.70,1176.37L1639.81,1176.37L1639.81,1118.26L1640.93,1118.26L1640.93,1093.54L1642.04,1093.54L1642.04,981.48L1643.16,981.48L1643.16,1090.46L1644.27,1090.46L1644.28,1076.23L1645.39,1076.23L1645.39,1112.65L1646.51,1112.65L1646.51,1126.57L1647.62,1126.57L1647.62,1138.31L1648.74,1138.31L1648.74,1122.55L1649.85,1122.55L1649.85,1165.83L1650.97,1165.83L1650.97,1097.84L1652.08,1097.84L1652.08,1053.60L1653.20,1053.60L1653.20,1107.97L1654.31,1107.97L1654.31,1149.28L1655.43,1149.28L1655.43,1130.92L1656.55,1130.92L1656.55,1092.30L1657.66,1092.30L1657.66,1046.39L1658.78,1046.39L1658.78,1093.01L1659.89,1093.01L1659.89,1118.44L1661.01,1118.44L1661.01,1162.48L1662.12,1162.48L1662.12,1104.09L1663.24,1104.09L1663.24,1120.41L1664.35,1120.41L1664.35,1127.34L1665.47,1127.34L1665.47,1129.05L1666.58,1129.05L1666.58,1125.72L1667.70,1125.72L1667.70,1137.16L1668.82,1137.16L1668.82,1149.84L1669.93,1149.84L1669.93,1192.63L1671.05,1192.63L1671.05,1164.79L1672.16,1164.79L1672.16,1178.32L1673.28,1178.32L1673.28,1184.84L1674.39,1184.84L1674.39,1186.90L1675.51,1186.90L1675.51,1192.30L1676.62,1192.30L1676.62,1203.57L1677.74,1203.57L1677.74,1195.80L1678.85,1195.80L1678.85,1185.63L1679.97,1185.63L1679.97,1188.18L1681.09,1188.18L1681.09,1320.45Z" fill="#23916f"/>
<path d="M1855.10,1320.45L1855.10,1237.62L1856.22,1237.62L1856.22,1233.55L1857.33,1233.55L1857.33,1228.12L1858.45,1228.12L1858.45,1176.55L1859.56,1176.55L1859.56,1144.83L1860.68,1144.83L1860.68,1128.02L1861.79,1128.02L1861.79,1092.11L1862.91,1092.11L1862.91,1069.76L1864.02,1069.76L1864.02,1143.50L1865.14,1143.50L1865.14,1066.07L1866.25,1066.07L1866.25,1017.54L1867.37,1017.54L1867.37,1041.31L1868.49,1041.31L1868.49,1035.65L1869.60,1035.65L1869.60,1006.72L1870.72,1006.72L1870.72,1020.78L1871.83,1020.78L1871.83,1052.33L1872.95,1052.33L1872.95,1036.58L1874.06,1036.58L1874.06,1037.47L1875.18,1037.47L1875.18,1001.16L1876.29,1001.16L1876.29,941.81L1877.41,941.81L1877.41,998.37L1878.52,998.37L1878.52,1021.36L1879.64,1021.36L1879.64,1046.81L1880.76,1046.81L1880.76,1066.30L1881.87,1066.30L1881.87,1003.12L1882.99,1003.12L1882.99,1070.92L1884.10,1070.92L1884.10,1131.94L1885.22,1131.94L1885.22,1041.02L1886.33,1041.02L1886.33,998.85L1887.45,998.85L1887.45,989.86L1888.56,989.86L1888.56,938.21L1889.68,938.21L1889.68,1118.80L1890.80,1118.80L1890.80,1075.41L1891.91,1075.41L1891.91,993.07L1893.03,993.07L1893.03,1092.44L1894.14,1092.44L1894.14,927.39L1895.26,927.39L1895.26,1087.60L1896.37,1087.60L1896.37,1009.57L1897.49,1009.57L1897.49,1012.46L1898.60,1012.46L1898.60,1047.23L1899.72,1047.23L1899.72,1093.92L1900.83,1093.92L1900.83,1010.04L1901.95,1010.04L1901.95,937.09L1903.07,937.09L1903.07,928.99L1904.18,928.99L1904.18,927.39L1905.30,927.39L1905.30,984.94L1906.41,984.94L1906.41,1057.45L1907.53,1057.45L1907.53,1077.25L1908.64,1077.25L1908.64,869.69L1909.76,869.69L1909.76,967.30L1910.87,967.30L1910.87,1006.60L1911.99,1006.60L1911.99,1072.84L1913.10,1072.84L1913.10,958.65L1914.22,958.65L1914.22,934.60L1915.34,934.60L1915.34,985.47L1916.45,985.47L1916.45,1054.70L1917.57,1054.70L1917.57,1136.95L1918.68,1136.95L1918.68,1098.84L1919.80,1098.84L1919.80,1086.58L1920.91,1086.58L1920.91,1065.91L1922.03,1065.91L1922.03,1057.21L1923.14,1057.21L1923.14,1110.10L1924.26,1110.10L1924.26,1120.85L1925.37,1120.85L1925.38,1057.49L1926.49,1057.49L1926.49,1017.54L1927.61,1017.54L1927.61,1164.82L1928.72,1164.82L1928.72,1057.40L1929.84,1057.40L1929.84,1057.21L1930.95,1057.21L1930.95,1087.58L1932.07,1087.58L1932.07,1102.32L1933.18,1102.32L1933.18,1131.39L1934.30,1131.39L1934.30,1092.69L1935.41,1092.69L1935.41,1057.21L1936.53,1057.21L1936.53,1090.65L1937.65,1090.65L1937.65,1115.16L1938.76,1115.16L1938.76,1138.82L1939.88,1138.82L1939.88,1122.50L1940.99,1122.50L1940.99,1130.36L1942.11,1130.36L1942.11,1168.98L1943.22,1168.98L1943.22,1033.24L1944.34,1033.24L1944.34,970.66L1945.45,970.66L1945.45,1017.02L1946.57,1017.02L1946.57,1030.87L1947.68,1030.87L1947.68,967.06L1948.80,967.06L1948.80,1029.15L1949.92,1029.15L1949.92,1080.76L1951.03,1080.76L1951.03,1126.70L1952.15,1126.70L1952.15,1072.34L1953.26,1072.34L1953.26,1057.21L1954.38,1057.21L1954.38,1092.33L1955.49,1092.33L1955.49,1103.43L1956.61,1103.43L1956.61,1128.14L1957.72,1128.14L1957.72,1127.44L1958.84,1127.44L1958.84,1121.34L1959.95,1121.34L1959.95,1039.18L1961.07,1039.18L1961.07,1064.30L1962.19,1064.30L1962.19,1127.35L1963.30,1127.35L1963.30,1087.59L1964.42,1087.59L1964.42,1122.30L1965.53,1122.30L1965.53,1095.61L1966.65,1095.61L1966.65,1125.74L1967.76,1125.74L1967.76,1057.21L1968.88,1057.21L1968.88,1139.74L1969.99,1139.74L1969.99,1162.66L1971.11,1162.66L1971.11,1100.48L1972.22,1100.48L1972.22,1126.56L1973.34,1126.56L1973.34,1167.74L1974.46,1167.74L1974.46,1177.03L1975.57,1177.03L1975.57,1165.49L1976.69,1165.49L1976.69,1141.58L1977.80,1141.58L1977.80,1149.60L1978.92,1149.60L1978.92,1187.43L1980.03,1187.43L1980.03,1122.12L1981.15,1122.12L1981.15,1148.18L1982.26,1148.18L1982.26,1181.92L1983.38,1181.92L1983.38,1187.11L1984.50,1187.11L1984.50,1192.98L1985.61,1192.98L1985.61,1199.96L1986.73,1199.96L1986.73,1194.00L1987.84,1194.00L1987.84,1196.76L1988.96,1196.76L1988.96,1200.95L1990.07,1200.95L1990.07,1202.39L1991.19,1202.39L1991.19,1206.85L1992.30,1206.85L1992.30,1209.59L1993.42,1209.59L1993.42,1212.11L1994.53,1212.11L1994.53,1190.78L1995.65,1190.78L1995.65,1194.78L1996.77,1194.78L1996.77,1203.25L1997.88,1203.25L1997.88,1199.90L1999.00,1199.90L1999.00,1190.72L2000.11,1190.72L2000.11,1201.80L2001.23,1201.80L2001.23,1200.71L2002.34,1200.71L2002.34,1320.45Z" fill="#23916f"/>
<line x1="167.6" y1="815.6" x2="167.6" y2="1321.45" stroke="#555" stroke-width="1.4"/>
<line x1="167.2" y1="1321.05" x2="2417.0" y2="1321.05" stroke="#555" stroke-width="1.6"/>
<line x1="156.7" y1="1320.45" x2="168.2" y2="1320.45" stroke="#8c8c8c" stroke-width="1.1"/>
<text x="133.94" y="1326.35" font-size="20.5" font-weight="normal" fill="#3d3d3d" text-anchor="start" textLength="12.46" lengthAdjust="spacingAndGlyphs" stroke="#3d3d3d" stroke-width="0.25" xml:space="preserve">0</text>
<line x1="156.7" y1="1248.33" x2="168.2" y2="1248.33" stroke="#8c8c8c" stroke-width="1.1"/>
<text x="121.48" y="1254.23" font-size="20.5" font-weight="normal" fill="#3d3d3d" text-anchor="start" textLength="24.92" lengthAdjust="spacingAndGlyphs" stroke="#3d3d3d" stroke-width="0.25" xml:space="preserve">20</text>
<line x1="156.7" y1="1176.21" x2="168.2" y2="1176.21" stroke="#8c8c8c" stroke-width="1.1"/>
<text x="121.48" y="1182.11" font-size="20.5" font-weight="normal" fill="#3d3d3d" text-anchor="start" textLength="24.92" lengthAdjust="spacingAndGlyphs" stroke="#3d3d3d" stroke-width="0.25" xml:space="preserve">40</text>
<line x1="156.7" y1="1104.09" x2="168.2" y2="1104.09" stroke="#8c8c8c" stroke-width="1.1"/>
<text x="121.48" y="1109.99" font-size="20.5" font-weight="normal" fill="#3d3d3d" text-anchor="start" textLength="24.92" lengthAdjust="spacingAndGlyphs" stroke="#3d3d3d" stroke-width="0.25" xml:space="preserve">60</text>
<line x1="156.7" y1="1031.96" x2="168.2" y2="1031.96" stroke="#8c8c8c" stroke-width="1.1"/>
<text x="121.48" y="1037.86" font-size="20.5" font-weight="normal" fill="#3d3d3d" text-anchor="start" textLength="24.92" lengthAdjust="spacingAndGlyphs" stroke="#3d3d3d" stroke-width="0.25" xml:space="preserve">80</text>
<line x1="156.7" y1="959.84" x2="168.2" y2="959.84" stroke="#8c8c8c" stroke-width="1.1"/>
<text x="109.02" y="965.74" font-size="20.5" font-weight="normal" fill="#3d3d3d" text-anchor="start" textLength="37.38" lengthAdjust="spacingAndGlyphs" stroke="#3d3d3d" stroke-width="0.25" xml:space="preserve">100</text>
<line x1="156.7" y1="887.72" x2="168.2" y2="887.72" stroke="#8c8c8c" stroke-width="1.1"/>
<text x="109.02" y="893.62" font-size="20.5" font-weight="normal" fill="#3d3d3d" text-anchor="start" textLength="37.38" lengthAdjust="spacingAndGlyphs" stroke="#3d3d3d" stroke-width="0.25" xml:space="preserve">120</text>
<line x1="156.7" y1="815.60" x2="168.2" y2="815.60" stroke="#8c8c8c" stroke-width="1.1"/>
<text x="109.02" y="821.50" font-size="20.5" font-weight="normal" fill="#3d3d3d" text-anchor="start" textLength="37.38" lengthAdjust="spacingAndGlyphs" stroke="#3d3d3d" stroke-width="0.25" xml:space="preserve">140</text>
<line x1="168.20" y1="1321.45" x2="168.20" y2="1332.45" stroke="#8a8a8a" stroke-width="1.2"/>
<text x="130.12" y="1356.80" font-size="20.5" font-weight="normal" fill="#111" text-anchor="start" textLength="76.75" lengthAdjust="spacingAndGlyphs" stroke="#111" stroke-width="0.3" xml:space="preserve">dim. 25</text>
<line x1="489.46" y1="1321.45" x2="489.46" y2="1332.45" stroke="#8a8a8a" stroke-width="1.2"/>
<text x="454.67" y="1356.80" font-size="20.5" font-weight="normal" fill="#111" text-anchor="start" textLength="70.18" lengthAdjust="spacingAndGlyphs" stroke="#111" stroke-width="0.3" xml:space="preserve">lun. 26</text>
<line x1="810.71" y1="1321.45" x2="810.71" y2="1332.45" stroke="#8a8a8a" stroke-width="1.2"/>
<text x="771.34" y="1356.80" font-size="20.5" font-weight="normal" fill="#111" text-anchor="start" textLength="79.34" lengthAdjust="spacingAndGlyphs" stroke="#111" stroke-width="0.3" xml:space="preserve">mar. 27</text>
<line x1="1131.97" y1="1321.45" x2="1131.97" y2="1332.45" stroke="#8a8a8a" stroke-width="1.2"/>
<text x="1092.65" y="1356.80" font-size="20.5" font-weight="normal" fill="#111" text-anchor="start" textLength="79.24" lengthAdjust="spacingAndGlyphs" stroke="#111" stroke-width="0.3" xml:space="preserve">mer. 28</text>
<line x1="1453.23" y1="1321.45" x2="1453.23" y2="1332.45" stroke="#8a8a8a" stroke-width="1.2"/>
<text x="1418.11" y="1356.80" font-size="20.5" font-weight="normal" fill="#111" text-anchor="start" textLength="70.83" lengthAdjust="spacingAndGlyphs" stroke="#111" stroke-width="0.3" xml:space="preserve">jeu. 29</text>
<line x1="1774.49" y1="1321.45" x2="1774.49" y2="1332.45" stroke="#8a8a8a" stroke-width="1.2"/>
<text x="1736.91" y="1356.80" font-size="20.5" font-weight="normal" fill="#111" text-anchor="start" textLength="75.76" lengthAdjust="spacingAndGlyphs" stroke="#111" stroke-width="0.3" xml:space="preserve">ven. 30</text>
<line x1="2095.74" y1="1321.45" x2="2095.74" y2="1332.45" stroke="#8a8a8a" stroke-width="1.2"/>
<text x="2055.44" y="1356.80" font-size="20.5" font-weight="normal" fill="#111" text-anchor="start" textLength="81.21" lengthAdjust="spacingAndGlyphs" stroke="#111" stroke-width="0.3" xml:space="preserve">sam. 31</text>
<g transform="translate(86.1,1067.9) rotate(-90)"><text x="-15.10" y="0.00" font-size="24" font-weight="normal" fill="#3d3d3d" text-anchor="start" textLength="30.20" lengthAdjust="spacingAndGlyphs"  xml:space="preserve">kW</text></g>
<path d="M1990.7,58 H2406 V91 Q2406,97.8 2399,97.8 H1990.7 Z" fill="#fff"/>
<rect x="2405.2" y="66" width="1.6" height="27" fill="#000" fill-opacity="0.12"/>
<text x="2112.20" y="88.90" font-size="25.6" font-weight="bold" fill="#000" text-anchor="start" textLength="172.50" lengthAdjust="spacingAndGlyphs"  xml:space="preserve">LHB-site-L726</text>
<rect x="1992.45" y="108.05" width="411.00" height="57.60" rx="8.5" ry="8.5" fill="#fff" stroke="#808080" stroke-width="3.5"/>
<text x="2051.00" y="148.30" font-size="29" font-weight="normal" fill="#000" text-anchor="start" textLength="313.00" lengthAdjust="spacingAndGlyphs"  xml:space="preserve">Consommation: 653 kWh</text>
<rect x="1992.45" y="178.05" width="411.00" height="57.50" rx="8.5" ry="8.5" fill="#fff" stroke="#808080" stroke-width="3.5"/>
<text x="2112.50" y="218.30" font-size="29" font-weight="normal" fill="#000" text-anchor="start" textLength="190.40" lengthAdjust="spacingAndGlyphs"  xml:space="preserve">P Max :  72 kW</text>
<rect x="1992.45" y="248.45" width="411.00" height="57.10" rx="8.5" ry="8.5" fill="#fff" stroke="#808080" stroke-width="3.5"/>
<text x="2119.30" y="288.40" font-size="29" font-weight="normal" fill="#000" text-anchor="start" textLength="177.30" lengthAdjust="spacingAndGlyphs"  xml:space="preserve">P min : 16 kW</text>
<rect x="562.35" y="806.25" width="411.70" height="57.60" rx="8.5" ry="8.5" fill="#fff" stroke="#808080" stroke-width="3.5"/>
<text x="609.00" y="846.30" font-size="29" font-weight="normal" fill="#000" text-anchor="start" textLength="337.20" lengthAdjust="spacingAndGlyphs"  xml:space="preserve">Consommation: 6 768 kWh</text>
<rect x="1100.05" y="806.25" width="411.30" height="57.60" rx="8.5" ry="8.5" fill="#fff" stroke="#808080" stroke-width="3.5"/>
<text x="1213.40" y="846.30" font-size="29" font-weight="normal" fill="#000" text-anchor="start" textLength="205.70" lengthAdjust="spacingAndGlyphs"  xml:space="preserve">P Max :  135 kW</text>
<rect x="1610.45" y="806.25" width="411.20" height="57.60" rx="8.5" ry="8.5" fill="#fff" stroke="#808080" stroke-width="3.5"/>
<text x="1737.10" y="846.30" font-size="29" font-weight="normal" fill="#000" text-anchor="start" textLength="177.40" lengthAdjust="spacingAndGlyphs"  xml:space="preserve">P min : 16 kW</text>
<rect x="1047.8" y="542.4" width="522.7" height="69.6" rx="9" ry="9" fill="#fff" fill-opacity="0.9"/>
<text x="1137.00" y="588.60" font-size="29.5" font-weight="bold" fill="#151a15" text-anchor="start" textLength="354.00" lengthAdjust="spacingAndGlyphs"  xml:space="preserve">samedi 31 janvier 2026</text>
<rect x="177" y="49.2" width="481.1" height="77.3" fill="#090818"/>
<g fill="none" stroke="url(#eco)" stroke-width="6.8" stroke-linecap="round" stroke-linejoin="round">
<path d="M211.4,94.6 A9.7,11.3 0 1 0 208.8,103.3"/>
<path d="M193.5,95 H210.5" stroke-width="4.4"/>
<path d="M238.6,88.6 A9.9,11.3 0 1 0 239.0,102.4"/>
<ellipse cx="257.4" cy="95.4" rx="10.1" ry="11.3"/>
</g>
<line x1="199.2" y1="74.6" x2="204.8" y2="71.9" stroke="#00f0c8" stroke-width="5.6" stroke-linecap="round"/>
<g fill="none" stroke="#fff" stroke-width="6.8" stroke-linecap="round" stroke-linejoin="round">
<path d="M275.4,87.2 L282.8,106.8 L291.6,82 L299.6,106.8 L314,68.2"/>
<ellipse cx="325" cy="95.4" rx="9.4" ry="11.3"/>
<path d="M336.2,83.5 V106.6"/>
<path d="M347,73.2 V100.6 Q347,107.4 353,107.4"/><path d="M341.8,81.8 H355"/>
<path d="M362.2,73.2 V100.6 Q362.2,107.4 368.8,107.4"/><path d="M356,81.8 H372"/>
</g>
<ellipse cx="433.9" cy="89" rx="26.1" ry="28.1" fill="#00b4e2"/>
<text x="419.40" y="96.40" font-size="24" font-weight="normal" fill="#fff" text-anchor="start" textLength="31.00" lengthAdjust="spacingAndGlyphs"  xml:space="preserve">Rte</text>
<line x1="419.2" y1="89.8" x2="450.2" y2="89.8" stroke="#fff" stroke-width="1.5"/>
<text x="468.60" y="79.00" font-size="11.4" font-weight="normal" fill="#0a9ed0" text-anchor="start" textLength="47.60" lengthAdjust="spacingAndGlyphs" stroke="#0a9ed0" stroke-width="0.35" xml:space="preserve">Le réseau</text>
<text x="468.60" y="92.10" font-size="11.4" font-weight="normal" fill="#0a9ed0" text-anchor="start" textLength="60.40" lengthAdjust="spacingAndGlyphs" stroke="#0a9ed0" stroke-width="0.35" xml:space="preserve">de transport</text>
<text x="468.60" y="104.90" font-size="11.4" font-weight="normal" fill="#0a9ed0" text-anchor="start" textLength="56.30" lengthAdjust="spacingAndGlyphs" stroke="#0a9ed0" stroke-width="0.35" xml:space="preserve">d'électricité</text>
<rect x="546.7" y="61.5" width="100.4" height="55.4" fill="#fff"/>
<rect x="553" y="68.8" width="7.9" height="6.7" fill="#2b3b8d"/><rect x="564.5" y="68.8" width="7.4" height="6.7" fill="#e1000f"/>
<text x="553.00" y="84.90" font-size="7.6" font-weight="bold" fill="#1e1e1e" text-anchor="start" textLength="43.60" lengthAdjust="spacingAndGlyphs"  xml:space="preserve">RÉPUBLIQUE</text>
<text x="553.00" y="93.20" font-size="7.6" font-weight="bold" fill="#1e1e1e" text-anchor="start" textLength="40.50" lengthAdjust="spacingAndGlyphs"  xml:space="preserve">FRANÇAISE</text>
<text x="553.50" y="100.20" font-size="3.6" font-weight="normal" fill="#666" text-anchor="start" textLength="11.00" lengthAdjust="spacingAndGlyphs" font-style="italic" xml:space="preserve">Liberté</text>
<text x="553.50" y="104.90" font-size="3.6" font-weight="normal" fill="#666" text-anchor="start" textLength="11.00" lengthAdjust="spacingAndGlyphs" font-style="italic" xml:space="preserve">Égalité</text>
<text x="553.50" y="110.00" font-size="3.6" font-weight="normal" fill="#666" text-anchor="start" textLength="16.50" lengthAdjust="spacingAndGlyphs" font-style="italic" xml:space="preserve">Fraternité</text>
<rect x="606.9" y="66.7" width="35.2" height="45" fill="none" stroke="#5b8bd0" stroke-width="0.9"/>
<rect x="608.3" y="68.1" width="32.4" height="42.2" fill="none" stroke="#a9c4ea" stroke-width="0.6"/>
<text x="611.90" y="74.90" font-size="6.4" font-weight="bold" fill="#e1000f" text-anchor="start" textLength="25.20" lengthAdjust="spacingAndGlyphs"  xml:space="preserve">ADEME</text>
<circle cx="624" cy="86.9" r="8.9" fill="#2350b8"/>
<path d="M620,81 q3,-2 5,0 q-1,3 -3,3 q1,3 -2,5 q-2,-3 0,-8z M626,88 q3,-1 3,3 q-2,3 -4,1z" fill="#9fb6e8"/>
<line x1="611.3" y1="100.3" x2="637.1" y2="100.3" stroke="#e1000f" stroke-width="1.7" stroke-dasharray="2.2 0.6" stroke-opacity="0.8"/>
<line x1="611.3" y1="103.9" x2="637.1" y2="103.9" stroke="#e1000f" stroke-width="1.7" stroke-dasharray="2.2 0.6" stroke-opacity="0.8"/>
<line x1="611.3" y1="107.7" x2="637.1" y2="107.7" stroke="#e1000f" stroke-width="1.7" stroke-dasharray="2.2 0.6" stroke-opacity="0.8"/>
<g fill="#dcdcdc" fill-opacity="0.97">
<rect x="169.3" y="135.6" width="491.3" height="3.6"/>
<rect x="169.3" y="139.2" width="3.1" height="113.4"/>
<rect x="169.3" y="252.6" width="491.3" height="5.9"/>
<rect x="655.4" y="139.2" width="5.2" height="113.4"/>
<rect x="288.9" y="139.2" width="5.6" height="113.4"/>
<rect x="411.0" y="139.2" width="5.6" height="113.4"/>
<rect x="533.2" y="139.2" width="5.6" height="113.4"/>
<rect x="172.4" y="189" width="116.5" height="6.3"/>
<rect x="294.5" y="189" width="116.5" height="6.3"/>
<rect x="416.6" y="189" width="116.6" height="6.3"/>
<rect x="538.8" y="189" width="116.6" height="6.3"/>
</g>
<text x="231.2" y="175.1" font-size="34" font-weight="normal" text-anchor="middle" fill="#000" stroke="#000" stroke-width="0.5">J</text>
<text x="320.8" y="175.1" font-size="34" font-weight="normal" text-anchor="middle" fill="#000" stroke="#000" stroke-width="0.5">J</text>
<text x="442.9" y="175.1" font-size="34" font-weight="normal" text-anchor="middle" fill="#000" stroke="#000" stroke-width="0.5">J</text>
<text x="565.0" y="175.1" font-size="34" font-weight="normal" text-anchor="middle" fill="#000" stroke="#000" stroke-width="0.5">J</text>
<text x="353.7" y="174.4" font-size="30" font-weight="normal" text-anchor="middle" fill="#000" stroke="#000" stroke-width="0.5">+</text>
<text x="475.8" y="174.4" font-size="30" font-weight="normal" text-anchor="middle" fill="#000" stroke="#000" stroke-width="0.5">+</text>
<text x="598.0" y="174.4" font-size="30" font-weight="normal" text-anchor="middle" fill="#000" stroke="#000" stroke-width="0.5">+</text>
<text x="385.2" y="175.1" font-size="34" font-weight="normal" text-anchor="middle" fill="#000" stroke="#000" stroke-width="0.5">1</text>
<text x="508.6" y="175.1" font-size="34" font-weight="bold" text-anchor="middle" fill="#000" stroke="#000" stroke-width="0.5">2</text>
<text x="630.8" y="175.1" font-size="34" font-weight="bold" text-anchor="middle" fill="#000" stroke="#000" stroke-width="0.5">3</text>
<svg x="180" y="195.1" width="106.0" height="54.8" viewBox="0 0 100 52" preserveAspectRatio="none"><rect width="100" height="52" fill="url(#sea)"/><path d="M8,0 C30,10 50,26 72,26 C85,26 95,20 100,14 L100,0 Z" fill="#00f0ca"/><path d="M28,0 C45,6 60,13 75,13 C87,13 95,9 100,5 L100,0 Z" fill="#00a08a"/></svg>
<svg x="302" y="196" width="106.0" height="55.8" viewBox="0 0 100 52" preserveAspectRatio="none"><rect width="100" height="52" fill="url(#sea)"/><path d="M8,0 C30,10 50,26 72,26 C85,26 95,20 100,14 L100,0 Z" fill="#00f0ca"/><path d="M28,0 C45,6 60,13 75,13 C87,13 95,9 100,5 L100,0 Z" fill="#00a08a"/></svg>
<svg x="424" y="196" width="106.6" height="55.8" viewBox="0 0 100 52" preserveAspectRatio="none"><rect width="100" height="52" fill="url(#sea)"/><path d="M8,0 C30,10 50,26 72,26 C85,26 95,20 100,14 L100,0 Z" fill="#00f0ca"/><path d="M28,0 C45,6 60,13 75,13 C87,13 95,9 100,5 L100,0 Z" fill="#00a08a"/></svg>
<svg x="544.1" y="196" width="106.1" height="55.8" viewBox="0 0 100 52" preserveAspectRatio="none"><rect width="100" height="52" fill="url(#sea)"/><path d="M8,0 C30,10 50,26 72,26 C85,26 95,20 100,14 L100,0 Z" fill="#00f0ca"/><path d="M28,0 C45,6 60,13 75,13 C87,13 95,9 100,5 L100,0 Z" fill="#00a08a"/></svg>
<rect x="2322.3" y="1322.3" width="115.7" height="56" fill="#fff"/>
<path d="M2360.6,1342.4 A12.3,12.3 0 1 0 2361.4,1352.6 H2348.2" fill="none" stroke="#0b6fb8" stroke-width="5.6" stroke-linecap="round"/>
<path d="M2370.4,1346.6 A6.7,6.7 0 1 1 2381.8,1351.2 L2371.4,1360.6 H2385.6" fill="none" stroke="#0b6fb8" stroke-width="5" stroke-linecap="butt" stroke-linejoin="miter"/>
<path d="M2392.2,1324.9 L2383.6,1338.5 L2390.3,1336.5 L2389.7,1363 L2396.5,1340.5 L2400.2,1336 L2393.5,1337.2 Z" fill="#e9602a"/>
<path d="M2401.8,1338.8 H2424.2 L2419.6,1344.2 H2397.2000000000003 Z" fill="#f39222"/>
<path d="M2397.6,1348.4 H2418.2 L2413.6,1353.8 H2393.0 Z" fill="#f39222"/>
<path d="M2393.4,1358 H2414.0 L2409.4,1363.4 H2388.8 Z" fill="#f39222"/>
<text x="2394.20" y="1334.60" font-size="6.6" font-weight="bold" fill="#e9602a" text-anchor="start" textLength="29.60" lengthAdjust="spacingAndGlyphs"  xml:space="preserve">FRANCE</text>
<line x1="2340" y1="1366.9" x2="2414" y2="1366.9" stroke="#0b6fb8" stroke-width="1.5" stroke-opacity="0.5" stroke-dasharray="3 0.8"/>
<rect x="0" y="1413.7" width="2511" height="1.3" fill="#000"/><rect x="2510.1" y="0" width="0.9" height="1415" fill="#000"/>
</svg>
</body></html>
